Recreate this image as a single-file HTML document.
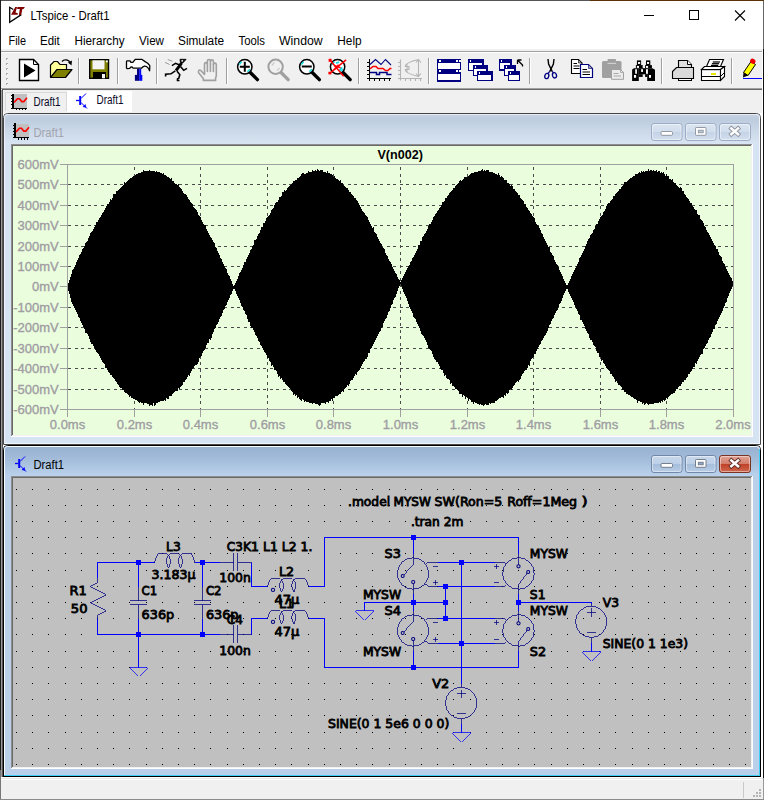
<!DOCTYPE html>
<html lang="en"><head><meta charset="utf-8"><title>LTspice - Draft1</title>
<style>
html,body{margin:0;padding:0;background:#fff;overflow:hidden}
body{width:764px;height:800px}
svg{display:block}
text{white-space:pre}
</style></head><body>
<svg width="764" height="800" viewBox="0 0 764 800">
<defs>
<linearGradient id="g1" x1="0" y1="0" x2="0" y2="1"><stop offset="0" stop-color="#C6D3E4"/><stop offset="0.18" stop-color="#BDCCDE"/><stop offset="0.55" stop-color="#CAD8E8"/><stop offset="1" stop-color="#D8E4F2"/></linearGradient>
<linearGradient id="g2" x1="0" y1="0" x2="0" y2="1"><stop offset="0" stop-color="#96B0D0"/><stop offset="0.5" stop-color="#A5BEDB"/><stop offset="1" stop-color="#BAD2EC"/></linearGradient>
<linearGradient id="b1" x1="0" y1="0" x2="0" y2="1"><stop offset="0" stop-color="#DCE6F2"/><stop offset="0.5" stop-color="#D0DDEC"/><stop offset="0.5" stop-color="#C4D3E6"/><stop offset="1" stop-color="#D2DFEE"/></linearGradient>
<linearGradient id="b2" x1="0" y1="0" x2="0" y2="1"><stop offset="0" stop-color="#C9D9EC"/><stop offset="0.5" stop-color="#BCCFE6"/><stop offset="0.5" stop-color="#A5BDDB"/><stop offset="1" stop-color="#B9CDE6"/></linearGradient>
<linearGradient id="b3" x1="0" y1="0" x2="0" y2="1"><stop offset="0" stop-color="#E3A596"/><stop offset="0.5" stop-color="#D27C69"/><stop offset="0.5" stop-color="#BF4028"/><stop offset="1" stop-color="#CF6A50"/></linearGradient>
</defs>
<rect x="0" y="0" width="764" height="800" fill="#FFFFFF" />
<rect x="1" y="49" width="761" height="1" fill="#F0F0F0" />
<rect x="1" y="50" width="761" height="38" fill="#F0F0F0" />
<rect x="1" y="51" width="761" height="1" fill="#A0A0A0" />
<rect x="1" y="52" width="761" height="1" fill="#FFFFFF" />
<rect x="1" y="88" width="761" height="25" fill="#F0F0F0" />
<rect x="1" y="88" width="761" height="1" fill="#A0A0A0" />
<rect x="2" y="89" width="760" height="1" fill="#696969" />
<rect x="0" y="0" width="590" height="1" fill="#555555" />
<rect x="590" y="0" width="174" height="1" fill="#5A3206" />
<rect x="0" y="0" width="1" height="770" fill="#1C1C1C" />
<rect x="0" y="770" width="1" height="30" fill="#777777" />
<rect x="763" y="1" width="1" height="48" fill="#666666" />
<rect x="763" y="49" width="1" height="729" fill="#111111" />
<rect x="763" y="778" width="1" height="22" fill="#999999" />
<rect x="1" y="90" width="1" height="687" fill="#9C9C9C" />
<rect x="2" y="89" width="1" height="688" fill="#555555" />
<g>
<path d="M13.3 9.5 L9.7 7.3 V22.2 L21.3 14.6" fill="none" stroke="#000" stroke-width="1.3" stroke-linejoin="miter"/>
<path d="M15.3 7.1 L17.1 7.1 L15.5 12.4 L17.9 13.2 L17.6 14.8 L11 14.8 Z" fill="#800000"/>
<path d="M17.5 7.1 L24.9 7.1 L23.5 8.9 L22.4 8.9 L21.2 15 L18.9 15 L19.8 8.9 L17 8.9 Z" fill="#800000"/>
</g>
<text x="30.5" y="20" font-family='"Liberation Sans", sans-serif' font-size="12.6" font-weight="normal" fill="#000" text-anchor="start" textLength="79" lengthAdjust="spacingAndGlyphs" >LTspice - Draft1</text>
<g stroke="#000" stroke-width="1" fill="none" shape-rendering="crispEdges">
<line x1="644" y1="15.5" x2="654" y2="15.5"/>
<rect x="689.5" y="10.5" width="9" height="9"/>
</g>
<g stroke="#000" stroke-width="1.1" fill="none"><line x1="735" y1="10.5" x2="745" y2="20.5"/><line x1="745" y1="10.5" x2="735" y2="20.5"/></g>
<text x="8.5" y="44.5" font-family='"Liberation Sans", sans-serif' font-size="12" font-weight="normal" fill="#000" text-anchor="start" textLength="17.5" lengthAdjust="spacingAndGlyphs" >File</text>
<text x="40" y="44.5" font-family='"Liberation Sans", sans-serif' font-size="12" font-weight="normal" fill="#000" text-anchor="start" textLength="19.8" lengthAdjust="spacingAndGlyphs" >Edit</text>
<text x="74.5" y="44.5" font-family='"Liberation Sans", sans-serif' font-size="12" font-weight="normal" fill="#000" text-anchor="start" textLength="50.0" lengthAdjust="spacingAndGlyphs" >Hierarchy</text>
<text x="139" y="44.5" font-family='"Liberation Sans", sans-serif' font-size="12" font-weight="normal" fill="#000" text-anchor="start" textLength="25" lengthAdjust="spacingAndGlyphs" >View</text>
<text x="178" y="44.5" font-family='"Liberation Sans", sans-serif' font-size="12" font-weight="normal" fill="#000" text-anchor="start" textLength="46" lengthAdjust="spacingAndGlyphs" >Simulate</text>
<text x="238.5" y="44.5" font-family='"Liberation Sans", sans-serif' font-size="12" font-weight="normal" fill="#000" text-anchor="start" textLength="26.5" lengthAdjust="spacingAndGlyphs" >Tools</text>
<text x="279" y="44.5" font-family='"Liberation Sans", sans-serif' font-size="12" font-weight="normal" fill="#000" text-anchor="start" textLength="43.7" lengthAdjust="spacingAndGlyphs" >Window</text>
<text x="337.3" y="44.5" font-family='"Liberation Sans", sans-serif' font-size="12" font-weight="normal" fill="#000" text-anchor="start" textLength="24.4" lengthAdjust="spacingAndGlyphs" >Help</text>
<rect x="6" y="58" width="2" height="2" fill="#ABABAB" />
<rect x="7" y="59" width="1" height="1" fill="#FFFFFF" />
<rect x="6" y="63" width="2" height="2" fill="#ABABAB" />
<rect x="7" y="64" width="1" height="1" fill="#FFFFFF" />
<rect x="6" y="68" width="2" height="2" fill="#ABABAB" />
<rect x="7" y="69" width="1" height="1" fill="#FFFFFF" />
<rect x="6" y="73" width="2" height="2" fill="#ABABAB" />
<rect x="7" y="74" width="1" height="1" fill="#FFFFFF" />
<rect x="6" y="78" width="2" height="2" fill="#ABABAB" />
<rect x="7" y="79" width="1" height="1" fill="#FFFFFF" />
<rect x="6" y="83" width="2" height="2" fill="#ABABAB" />
<rect x="7" y="84" width="1" height="1" fill="#FFFFFF" />
<rect x="78" y="58" width="1" height="26" fill="#A0A0A0" />
<rect x="79" y="58" width="1" height="26" fill="#FFFFFF" />
<rect x="117" y="58" width="1" height="26" fill="#A0A0A0" />
<rect x="118" y="58" width="1" height="26" fill="#FFFFFF" />
<rect x="156" y="58" width="1" height="26" fill="#A0A0A0" />
<rect x="157" y="58" width="1" height="26" fill="#FFFFFF" />
<rect x="226" y="58" width="1" height="26" fill="#A0A0A0" />
<rect x="227" y="58" width="1" height="26" fill="#FFFFFF" />
<rect x="358" y="58" width="1" height="26" fill="#A0A0A0" />
<rect x="359" y="58" width="1" height="26" fill="#FFFFFF" />
<rect x="428" y="58" width="1" height="26" fill="#A0A0A0" />
<rect x="429" y="58" width="1" height="26" fill="#FFFFFF" />
<rect x="529" y="58" width="1" height="26" fill="#A0A0A0" />
<rect x="530" y="58" width="1" height="26" fill="#FFFFFF" />
<rect x="661" y="58" width="1" height="26" fill="#A0A0A0" />
<rect x="662" y="58" width="1" height="26" fill="#FFFFFF" />
<rect x="731" y="58" width="1" height="26" fill="#A0A0A0" />
<rect x="732" y="58" width="1" height="26" fill="#FFFFFF" />

<!-- run -->
<g>
<path d="M19.5 59.5 H33.5 L38.5 64.5 V80.5 H19.5 Z" fill="#fff" stroke="#000" stroke-width="1.4"/>
<path d="M33.5 59.5 V64.5 H38.5" fill="none" stroke="#000" stroke-width="1"/>
<path d="M24 63.5 L24 77.5 L35.5 70.5 Z" fill="#000"/>
</g>
<!-- open -->
<g>
<path d="M50.5 77 V65 L54 61.5 H57.5 L60 64.5 H66.5 V69" fill="#FFFF9A" stroke="#000" stroke-width="1.2"/>
<path d="M50.5 77.5 L57 69.5 H72 L65.5 77.5 Z" fill="#808000" stroke="#000" stroke-width="1.2" stroke-linejoin="round"/>
<path d="M62 61.5 C64 59 69 59 70.5 63.5" fill="none" stroke="#000" stroke-width="1.3"/>
<path d="M68 62.5 L71.5 65.5 L72 60.5 Z" fill="#000"/>
</g>
<!-- save -->
<g>
<rect x="89.7" y="59.7" width="18.8" height="18.6" fill="#808000" stroke="#000" stroke-width="1.4"/>
<rect x="92.5" y="60.3" width="12" height="9" fill="#F4F4F4"/>
<rect x="93" y="72" width="13" height="6" fill="#000"/>
<rect x="102" y="74" width="3" height="4.3" fill="#F4F4F4"/>
<rect x="106" y="60.5" width="1.8" height="1.8" fill="#fff"/>
</g>
<!-- hammer -->
<g>
<path d="M126.5 61.6 Q126.5 60.8 127.5 60.8 H130 L131 62.4 H132.8 L135.2 59.3 H141.7 L145.1 61.6 L147.7 63.2 L149.8 65.6 L149.6 70.8 L148.5 68.4 L146.7 66.6 L144.6 66 L142.5 67.1 L141.5 68.2 H133.1 L132 66.8 L130.7 67.1 L129.7 68.4 L127.3 68.7 L126.5 68 Z" fill="#fff" stroke="#000" stroke-width="1.3" stroke-linejoin="round"/>
<rect x="137" y="68.8" width="2.2" height="6.2" fill="#000080"/><rect x="139.200" y="68.800" width="2" height="6.200" fill="#0000FF"/>
<rect x="134.900" y="74.900" width="4.300" height="5.900" fill="#000080"/><rect x="139.200" y="74.900" width="3.100" height="5.900" fill="#0000FF"/>
</g>
<!-- runner -->
<g stroke="#000" fill="none" stroke-linecap="butt" stroke-linejoin="miter">
<path d="M180 59.3 H186.1 L184 61.8 L182 63.4 L180.4 62.4 Z" fill="#000" stroke-width="0.8"/>
<rect x="181.4" y="60.1" width="1.7" height="1.5" fill="#fff" stroke="none"/>
<path d="M181.500 63.200 L176 70.700" stroke-width="3"/>
<path d="M179 64.700 L175.600 63.300 L171.900 65.600" stroke-width="1.500"/>
<path d="M180.500 66.600 L183.700 70.300 L187 68.300" stroke-width="1.500"/>
<path d="M175.300 70.800 L171 73.800 L165.600 74.300 V76.600" stroke-width="1.600"/>
<path d="M177 71.200 L179.800 74.600 L178.800 78.200 L177.500 78.900 V80.500 H179.500" stroke-width="1.600"/>
<path d="M167.800 59.500 L172.400 61.300 M165 62.400 L169.600 64.500" stroke="#9A9A9A" stroke-width="1"/>
</g>
<!-- hand (disabled) -->
<g fill="none" stroke="#A0A0A0" stroke-width="1.6" stroke-linejoin="round" stroke-linecap="round">
<path d="M203.3 80.4 H215.6 V78 L216.300 76 V64.600 Q216.300 63.100 214.900 63.100 Q213.400 63.100 213.400 64.600 V61.400 Q213.400 59.900 211.900 59.900 Q210.400 59.900 210.400 61.400 V61 Q210.400 59.500 208.900 59.500 Q207.400 59.500 207.400 61 V64 Q207.400 62.600 205.900 62.600 Q204.500 62.600 204.500 64 V74.500 L200.800 70.500 Q199.300 69.500 198.600 70.800 Q198 72 199 73.200 L203.300 78.500 Z"/>
<path d="M207.400 64 V71.500 M210.400 61.400 V71.500 M213.400 64.600 V71.500"/>
</g>

<g><line x1="250.0" y1="72.2" x2="257.40000000000003" y2="79.6" stroke="#000" stroke-width="3.4" stroke-linecap="round"/><circle cx="244.8" cy="66.8" r="7.2" fill="#fff" stroke="#000" stroke-width="1.5"/><path d="M239.20000000000002 64.6 L241.60000000000002 61.8" stroke="#19D9E6" stroke-width="1.6"/><path d="M247.4 71.8 L250.0 69.2" stroke="#19D9E6" stroke-width="1.6"/><path d="M239.8 66.8 H249.8 M244.8 61.8 V71.8" stroke="#000" stroke-width="2"/></g>
<g><line x1="280.8" y1="72.2" x2="288.20000000000005" y2="79.6" stroke="#A0A0A0" stroke-width="3.4" stroke-linecap="round"/><circle cx="275.6" cy="66.8" r="7.2" fill="#F0F0F0" stroke="#A0A0A0" stroke-width="2"/><path d="M271.8 65.6 L274.40000000000003 62.4 M277.1 70.6 L279.6 67.8" stroke="#C8C8C8" stroke-width="1.2"/></g>
<g><line x1="312.0" y1="72.2" x2="319.40000000000003" y2="79.6" stroke="#000" stroke-width="3.4" stroke-linecap="round"/><circle cx="306.8" cy="66.8" r="7.2" fill="#fff" stroke="#000" stroke-width="1.5"/><path d="M301.2 64.6 L303.6 61.8" stroke="#19D9E6" stroke-width="1.6"/><path d="M309.40000000000003 71.8 L312.0 69.2" stroke="#19D9E6" stroke-width="1.6"/><path d="M301.8 66.5 H311.8" stroke="#000" stroke-width="2"/></g>
<g><line x1="342.8" y1="72.2" x2="350.20000000000005" y2="79.6" stroke="#000" stroke-width="3.4" stroke-linecap="round"/><circle cx="337.6" cy="66.8" r="7.2" fill="#fff" stroke="#000" stroke-width="1.5"/><path d="M332.0 64.6 L334.40000000000003 61.8" stroke="#19D9E6" stroke-width="1.6"/><path d="M340.20000000000005 71.8 L342.8 69.2" stroke="#19D9E6" stroke-width="1.6"/><path d="M336.1 63.199999999999996 L339.1 62.199999999999996 M339.6 70.39999999999999 L342.20000000000005 67.39999999999999" stroke="#19D9E6" stroke-width="1.8"/><path d="M330.1 60.3 L343.6 76.3 M329.6 73.3 L346.1 59.8" stroke="#F00" stroke-width="1.5"/><rect x="328.6" y="58.8" width="3" height="3" fill="#F00"/><rect x="328.40000000000003" y="71.8" width="3" height="2.6" fill="#F00"/><path d="M334.6 65.8 L340.6 67.8 M334.1 69.8 L338.6 64.8" stroke="#F00" stroke-width="1.6"/></g>

<!-- waveform icon -->
<g fill="none" shape-rendering="crispEdges">
<path d="M369.5 59 V80.5 M367 78.500 H391" stroke="#000" stroke-width="1.5"/>
<path d="M367 62.5 H369 M367 66.5 H369 M367 70.5 H369 M367 74.5 H369 M374.500 79 V81 M379.500 79 V81 M384.500 79 V81 M389.500 79 V81" stroke="#000" stroke-width="1.2"/>
</g>
<g fill="none">
<path d="M370 64.5 L375.5 59.5 L381 64.5 L385.5 59.5 L391 65" stroke="#000080" stroke-width="1.1"/>
<path d="M370 68.800 L373 66.500 H376 L378 68.500 H383 L385.500 70.500 H388 L390 68.500 H391.500" stroke="#F00" stroke-width="1.5"/>
<path d="M370 72.5 H376.5 V74.5 H379.5 V72.5 H387 V74.5 H391.500" stroke="#000080" stroke-width="1.5"/>
</g>
<!-- eye diagram (disabled) -->
<g fill="none" stroke="#B4B4B4" stroke-width="1.1">
<path d="M400.5 59.500 V80.500 M398 78.500 H422"/>
<path d="M398 62.5 H400 M398 66.5 H400 M398 70.5 H400 M398 74.5 H400 M405.500 79 V81 M410.500 79 V81 M415.500 79 V81 M420.500 79 V81"/>
<path d="M405 66.5 C405.500 63 412 61 418.5 59.500 M405 69.500 C405.500 73 412 75 418.500 76.500 M405 66.500 H409 V69.500 H405 M407 64 V72 M418.500 60 V76.5 M416 62.500 L418.500 59.500 L421 62.500 M416 73.500 L418.500 76.500 L421 73.500"/>
</g>
<!-- tile -->
<g shape-rendering="crispEdges">
<rect x="437.5" y="59.500" width="23" height="21.5" fill="#fff" stroke="#000080" stroke-width="1.4"/>
<rect x="437" y="59" width="24" height="4" fill="#000080"/>
<rect x="437" y="69" width="24" height="4.500" fill="#000080"/>
<rect x="438.500" y="60" width="2" height="2" fill="#fff"/><rect x="455.500" y="60" width="2" height="2" fill="#fff"/><rect x="458.500" y="60" width="2" height="2" fill="#fff"/>
<rect x="438.500" y="70.300" width="2" height="2" fill="#fff"/><rect x="455.500" y="70.300" width="2" height="2" fill="#fff"/><rect x="458.500" y="70.300" width="2" height="2" fill="#fff"/>
</g>

<g shape-rendering="crispEdges"><rect x="468.6" y="59.6" width="14.3" height="10.8" fill="#fff" stroke="#000080" stroke-width="1.3"/><rect x="468" y="59" width="15.5" height="3.6" fill="#000080"/><rect x="469.5" y="59.9" width="1.8" height="1.8" fill="#fff"/></g>
<g shape-rendering="crispEdges"><rect x="473.6" y="65.6" width="13.3" height="9.8" fill="#fff" stroke="#000080" stroke-width="1.3"/><rect x="473" y="65" width="14.5" height="3.6" fill="#000080"/><rect x="474.5" y="65.9" width="1.8" height="1.8" fill="#fff"/></g>
<g shape-rendering="crispEdges"><rect x="477.6" y="71.6" width="14.3" height="9.0" fill="#fff" stroke="#000080" stroke-width="1.3"/><rect x="477" y="71" width="15.5" height="3.6" fill="#000080"/><rect x="478.5" y="71.9" width="1.8" height="1.8" fill="#fff"/></g>
<g shape-rendering="crispEdges"><rect x="499.6" y="59.6" width="11.3" height="10.3" fill="#fff" stroke="#000080" stroke-width="1.3"/><rect x="499" y="59" width="12.5" height="3.6" fill="#000080"/><rect x="500.5" y="59.9" width="1.8" height="1.8" fill="#fff"/></g>
<g shape-rendering="crispEdges"><rect x="504.6" y="65.6" width="10.3" height="9.8" fill="#fff" stroke="#000080" stroke-width="1.3"/><rect x="504" y="65" width="11.5" height="3.6" fill="#000080"/><rect x="505.5" y="65.9" width="1.8" height="1.8" fill="#fff"/></g>
<g shape-rendering="crispEdges"><rect x="508.6" y="71.6" width="11.100000000000001" height="9.0" fill="#fff" stroke="#000080" stroke-width="1.3"/><rect x="508" y="71" width="12.3" height="3.6" fill="#000080"/><rect x="509.5" y="71.9" width="1.8" height="1.8" fill="#fff"/></g>
<path d="M517.5 60 H521.500 M517.500 60 V64 M517.800 60.300 L522.500 65 V66.500" fill="none" stroke="#000" stroke-width="1.3"/>

<!-- scissors -->
<g fill="none">
<path d="M548 59 L548.600 64 L552.300 71.600 M554 59 L553.400 64 L549.700 71.600" stroke="#000" stroke-width="1.400"/>
<ellipse cx="546.800" cy="76" rx="2" ry="2.700" stroke="#000080" stroke-width="1.300" transform="rotate(15 546.800 76)"/>
<ellipse cx="554.500" cy="75.300" rx="2" ry="2.700" stroke="#000080" stroke-width="1.300" transform="rotate(-15 554.500 75.300)"/>
<path d="M549.700 71.400 L548.200 73.400 M552.300 71.400 L553.500 72.800" stroke="#000080" stroke-width="1.300"/>
</g>
<!-- copy -->
<g>
<path d="M571.500 59.500 H578.500 L582 63 V73.500 H571.500 Z" fill="#fff" stroke="#000" stroke-width="1.1"/>
<path d="M578.500 59.500 V63 H582 Z" fill="#A0A0A0" stroke="#000" stroke-width="0.600"/>
<path d="M573.500 63.500 H577 M573.500 66 H579.500 M573.500 68.500 H579.500" stroke="#000" stroke-width="1.1"/>
<path d="M580.500 64.500 H588.500 L592.500 68.500 V77.500 H580.500 Z" fill="#fff" stroke="#000080" stroke-width="1.2"/>
<path d="M588.500 64.500 V68.500 H592.500 Z" fill="#A0A0A0" stroke="#000080" stroke-width="0.600"/>
<path d="M582.500 69.500 H587 M582.500 72 H590 M582.500 74.500 H590" stroke="#000" stroke-width="1.1"/>
</g>
<!-- paste disabled -->
<g>
<rect x="602" y="61" width="19.500" height="17" rx="1.500" fill="#A0A0A0"/>
<rect x="607.500" y="59" width="8.500" height="4" rx="1" fill="#A0A0A0"/>
<rect x="607.500" y="62.800" width="8.500" height="1.200" fill="#D0D0D0"/>
<path d="M611.500 69.500 H620.500 L623.500 72.500 V79.300 H611.500 Z" fill="#ECECEC" stroke="#A0A0A0" stroke-width="1"/>
<path d="M620.500 69.500 V72.500 H623.500" fill="none" stroke="#A0A0A0" stroke-width="0.8"/>
<path d="M613.500 73.500 H618.500 M613.500 76 H621" stroke="#A8A8A8" stroke-width="1.1"/>
</g>
<!-- binoculars -->
<g fill="#000">
<rect x="636.900" y="60.400" width="4.200" height="4.800"/><rect x="635.900" y="65.100" width="6.800" height="3.200"/>
<rect x="646" y="60.400" width="4.300" height="4.800"/><rect x="645.100" y="65.100" width="6.800" height="3.200"/>
<path d="M632.100 69.400 L634 68.200 H638.800 V80.900 H632.100 Z"/>
<rect x="638.700" y="68.200" width="8.600" height="6.100"/><rect x="638.700" y="74.200" width="4" height="2.700"/><rect x="645.100" y="74.200" width="2.200" height="2.700"/>
<path d="M647.200 68.200 H652.500 L655 69.800 V80.900 H647.200 Z"/>
<g fill="#fff"><rect x="638" y="62" width="2.200" height="1.900"/><rect x="647" y="62" width="2.100" height="1.900"/><rect x="636.900" y="66" width="2.100" height="1.900"/><rect x="646" y="66" width="2.100" height="1.900"/>
<rect x="635.200" y="69.200" width="1.700" height="4.600"/><rect x="646" y="69.200" width="1.900" height="4.600"/><rect x="641.100" y="69.200" width="1.900" height="2.700"/>
<rect x="634" y="75" width="2.100" height="2.800"/><rect x="649" y="75" width="2" height="2.800"/></g>
</g>
<!-- print setup -->
<g stroke="#000" stroke-width="1.100" stroke-linejoin="miter">
<path d="M678.500 67.500 V60.500 H687.500 L691.500 64.500 V67.500" fill="#DEDEDE"/>
<path d="M687.500 60.500 V64.500 H691.500" fill="#fff" stroke-width="1"/>
<path d="M672.500 71.500 L676.500 67.500 H693.500 V78.500 H672.500 Z" fill="#DADADA"/>
<rect x="678.500" y="78.500" width="13" height="2" fill="#fff" stroke-width="1"/>
</g>
<!-- printer -->
<g stroke="#000" stroke-width="1.100" stroke-linejoin="miter">
<path d="M701.500 69.500 L704.500 66.500 H724.500 L720.500 69.500 Z" fill="#fff"/>
<path d="M709.500 59.500 H723.500 L720.500 66.500 H706.500 Z" fill="#fff"/>
<g stroke="none" fill="#000"><rect x="712.800" y="61.400" width="7.200" height="1.200"/><rect x="711.900" y="63.100" width="7.200" height="1.200"/><rect x="711" y="64.800" width="7.200" height="1.200"/></g>
<path d="M701.500 69.500 H720.500 V80.500 H701.500 Z" fill="#fff"/>
<path d="M720.500 69.500 L724.500 66.500 V76.500 L720.500 80.500 Z" fill="#fff"/>
<rect x="702" y="70" width="18" height="1" fill="#CFCFCF" stroke="none"/>
<path d="M701.500 76.500 H720.500 L724.500 72.500" fill="none" stroke-width="1"/>
<rect x="711" y="73" width="5" height="2" fill="#E6E600" stroke="none"/>
</g>
<!-- pencil -->
<g>
<path d="M743.500 72.500 L751 61.500 L755.500 64.500 L748 75.500 Z" fill="#FFFF00" stroke="#000" stroke-width="1"/>
<path d="M743.500 72.500 L748 75.500 L743 77.500 Z" fill="#000"/>
<ellipse cx="752.800" cy="61.300" rx="2.800" ry="2.400" fill="#F00000" transform="rotate(34 752.800 61.300)"/>
<rect x="743" y="78" width="19" height="1" fill="#0000FF"/>
</g>

<rect x="5.5" y="92.500" width="61" height="19" fill="#F0F0F0" stroke="#D9D9D9" stroke-width="1"/>
<rect x="67" y="91" width="65" height="21" fill="#FFFFFF" />
<rect x="5" y="111" width="62" height="2" fill="#F0F0F0" />
<g shape-rendering="crispEdges"><rect x="13.7" y="94.2" width="13.3" height="13.3" fill="#C0C0C0"/><rect x="12.3" y="93.7" width="1.4" height="15.2" fill="#000"/><rect x="10.8" y="107.5" width="16.2" height="1.4" fill="#000"/><rect x="10.8" y="95.2" width="1.6" height="1" fill="#000"/><rect x="10.8" y="98.2" width="1.6" height="1" fill="#000"/><rect x="10.8" y="101.2" width="1.6" height="1" fill="#000"/><rect x="10.8" y="104.2" width="1.6" height="1" fill="#000"/><rect x="16.0" y="108.7" width="1" height="1.6" fill="#000"/><rect x="19.0" y="108.7" width="1" height="1.6" fill="#000"/><rect x="22.0" y="108.7" width="1" height="1.6" fill="#000"/><rect x="25.0" y="108.7" width="1" height="1.6" fill="#000"/></g><path d="M14.1 102.4 L17.5 98.7 H19.5 L21.8 101.6 H23.8 L27.0 97.8" fill="none" stroke="#F00" stroke-width="1.6"/>
<text x="33.5" y="105.8" font-family='"Liberation Sans", sans-serif' font-size="12" font-weight="normal" fill="#0A0A28" text-anchor="start" textLength="27" lengthAdjust="spacingAndGlyphs" >Draft1</text>
<g fill="none" stroke="#0000FF"><path d="M76 100.5 H79.5" stroke-width="1.300"/><path d="M80.2 96 V105" stroke-width="2"/><path d="M81 98.5 L86 93.5" stroke-width="1"/><path d="M81 102.5 L87 108.5" stroke-width="1"/><path d="M83 106.8 L85.8 107.3 L85.3 104.5 Z" fill="#0000FF" stroke-width="0.600"/></g>
<text x="96.5" y="104.3" font-family='"Liberation Sans", sans-serif' font-size="12" font-weight="normal" fill="#0A0A28" text-anchor="start" textLength="27" lengthAdjust="spacingAndGlyphs" >Draft1</text>
<path d="M3.500 444.5 V117.5 Q3.500 113.5 7.500 113.5 H756.500 Q760.500 113.5 760.500 117.5 V444.5 Z" fill="#D6E3F2" stroke="#454545" stroke-width="1"/>
<path d="M4 144 V117.5 Q4 114 7.500 114 H756.500 Q760 114 760 117.5 V144 Z" fill="url(#g1)"/>
<path d="M4.500 444 V117.5 Q4.500 114.5 7.500 114.5 H756.500 Q759.500 114.5 759.500 117.5" fill="none" stroke="#FFFFFF" stroke-width="1" stroke-opacity="0.6"/>
<rect x="759" y="117" width="1" height="327" fill="#F2F6FB" />
<rect x="5" y="443" width="755" height="1" fill="#F2F6FB" />
<rect x="11" y="144" width="742" height="1" fill="#8E8E8E" />
<rect x="11" y="144" width="1" height="293" fill="#8E8E8E" />
<rect x="12" y="145" width="740" height="1" fill="#696969" />
<rect x="12" y="145" width="1" height="291" fill="#696969" />
<rect x="752" y="144" width="1" height="293" fill="#FFFFFF" />
<rect x="11" y="436" width="742" height="1" fill="#FFFFFF" />
<rect x="751" y="145" width="1" height="291" fill="#F1F1F1" />
<rect x="12" y="435" width="740" height="1" fill="#F1F1F1" />
<g shape-rendering="crispEdges"><rect x="15.7" y="123.7" width="13.3" height="13.3" fill="#C0C0C0"/><rect x="14.3" y="123.2" width="1.4" height="15.2" fill="#000"/><rect x="12.8" y="137.0" width="16.2" height="1.4" fill="#000"/><rect x="12.8" y="124.7" width="1.6" height="1" fill="#000"/><rect x="12.8" y="127.7" width="1.6" height="1" fill="#000"/><rect x="12.8" y="130.7" width="1.6" height="1" fill="#000"/><rect x="12.8" y="133.7" width="1.6" height="1" fill="#000"/><rect x="18.0" y="138.2" width="1" height="1.6" fill="#000"/><rect x="21.0" y="138.2" width="1" height="1.6" fill="#000"/><rect x="24.0" y="138.2" width="1" height="1.6" fill="#000"/><rect x="27.0" y="138.2" width="1" height="1.6" fill="#000"/></g><path d="M16.1 131.9 L19.5 128.2 H21.5 L23.8 131.1 H25.8 L29.0 127.3" fill="none" stroke="#F00" stroke-width="1.6"/>
<text x="33.5" y="137" font-family='"Liberation Sans", sans-serif' font-size="12" font-weight="normal" fill="#A3A3AE" text-anchor="start" textLength="30.5" lengthAdjust="spacingAndGlyphs" >Draft1</text>
<rect x="651.5" y="123.5" width="30.5" height="17" rx="2.500" fill="url(#b1)" stroke="#9DACC6" stroke-width="1"/>
<rect x="652.5" y="124.5" width="28.5" height="15" rx="1.800" fill="none" stroke="#fff" stroke-opacity="0.450" stroke-width="1"/>
<rect x="685.5" y="123.5" width="30.5" height="17" rx="2.500" fill="url(#b1)" stroke="#9DACC6" stroke-width="1"/>
<rect x="686.5" y="124.5" width="28.5" height="15" rx="1.800" fill="none" stroke="#fff" stroke-opacity="0.450" stroke-width="1"/>
<rect x="719.5" y="123.5" width="31.0" height="17" rx="2.500" fill="url(#b1)" stroke="#9DACC6" stroke-width="1"/>
<rect x="720.5" y="124.5" width="29.0" height="15" rx="1.800" fill="none" stroke="#fff" stroke-opacity="0.450" stroke-width="1"/>
<rect x="661" y="131.5" width="11.500" height="3.800" rx="1" fill="#fff" stroke="#8A8F99" stroke-width="0.900"/>
<rect x="695.500" y="127.5" width="10.500" height="7.800" rx="0.800" fill="#fff" stroke="#8A8F99" stroke-width="0.900"/>
<rect x="698.300" y="130.2" width="4.900" height="2.600" fill="#B9C6D8" stroke="#8A8F99" stroke-width="0.800"/>
<path d="M731.3000000000001 128.4 L738.1 134.20000000000002 M738.1 128.4 L731.3000000000001 134.20000000000002" stroke="#8A8F99" stroke-width="4.200" stroke-linecap="square"/>
<path d="M731.3000000000001 128.4 L738.1 134.20000000000002 M738.1 128.4 L731.3000000000001 134.20000000000002" stroke="#fff" stroke-width="2.500" stroke-linecap="square"/>
<rect x="13" y="146" width="738" height="289" fill="#EAFEDE" />
<g stroke="#4A4A4A" stroke-width="1" stroke-dasharray="3 3.500" shape-rendering="crispEdges">
<line x1="134.5" y1="167" x2="134.5" y2="409"/>
<line x1="200.5" y1="167" x2="200.5" y2="409"/>
<line x1="267.5" y1="167" x2="267.5" y2="409"/>
<line x1="333.5" y1="167" x2="333.5" y2="409"/>
<line x1="400.5" y1="167" x2="400.5" y2="409"/>
<line x1="467.5" y1="167" x2="467.5" y2="409"/>
<line x1="533.5" y1="167" x2="533.5" y2="409"/>
<line x1="600.5" y1="167" x2="600.5" y2="409"/>
<line x1="666.5" y1="167" x2="666.5" y2="409"/>
<line x1="68" y1="184.5" x2="733" y2="184.5"/>
<line x1="68" y1="205.5" x2="733" y2="205.5"/>
<line x1="68" y1="225.5" x2="733" y2="225.5"/>
<line x1="68" y1="246.5" x2="733" y2="246.5"/>
<line x1="68" y1="266.5" x2="733" y2="266.5"/>
<line x1="68" y1="286.5" x2="733" y2="286.5"/>
<line x1="68" y1="307.5" x2="733" y2="307.5"/>
<line x1="68" y1="327.5" x2="733" y2="327.5"/>
<line x1="68" y1="348.5" x2="733" y2="348.5"/>
<line x1="68" y1="368.5" x2="733" y2="368.5"/>
<line x1="68" y1="389.5" x2="733" y2="389.5"/>
</g>
<polygon points="67,286.4 68,286.4 68,283.2 69,283.2 69,280.2 70,280.2 70,277.1 71,277.1 71,273.7 72,273.7 72,269.5 73,269.5 73,268.9 74,268.9 74,266.7 75,266.7 75,264.5 76,264.5 76,262.0 77,262.0 77,260.1 78,260.1 78,258.3 79,258.3 79,255.1 80,255.1 80,254.3 81,254.3 81,252.0 82,252.0 82,248.5 83,248.5 83,247.5 84,247.5 84,246.2 85,246.2 85,243.4 86,243.4 86,242.4 87,242.4 87,240.5 88,240.5 88,238.4 89,238.4 89,236.4 90,236.4 90,233.3 91,233.3 91,232.2 92,232.2 92,230.9 93,230.9 93,228.7 94,228.7 94,226.7 95,226.7 95,224.8 96,224.8 96,221.5 97,221.5 97,221.8 98,221.8 98,220.1 99,220.1 99,218.4 100,218.4 100,216.8 101,216.8 101,214.5 102,214.5 102,212.9 103,212.9 103,211.6 104,211.6 104,209.7 105,209.7 105,208.4 106,208.4 106,206.4 107,206.4 107,203.9 108,203.9 108,203.8 109,203.8 109,202.1 110,202.1 110,199.2 111,199.2 111,199.6 112,199.6 112,198.3 113,198.3 113,194.4 114,194.4 114,193.5 115,193.5 115,194.1 116,194.1 116,191.4 117,191.4 117,191.4 118,191.4 118,189.6 119,189.6 119,188.9 120,188.9 120,187.9 121,187.9 121,186.8 122,186.8 122,185.7 123,185.7 123,185.1 124,185.1 124,181.8 125,181.8 125,182.6 126,182.6 126,182.2 127,182.2 127,181.4 128,181.4 128,180.2 129,180.2 129,179.3 130,179.3 130,178.4 131,178.4 131,178.2 132,178.2 132,176.5 133,176.5 133,176.4 134,176.4 134,175.7 135,175.7 135,174.7 136,174.7 136,174.2 137,174.2 137,174.0 138,174.0 138,172.7 139,172.7 139,172.7 140,172.7 140,173.2 141,173.2 141,172.4 142,172.4 142,172.1 143,172.1 143,170.4 144,170.4 144,171.2 145,171.2 145,171.4 146,171.4 146,171.1 147,171.1 147,171.0 148,171.0 148,170.7 149,170.7 149,170.0 150,170.0 150,171.0 151,171.0 151,170.5 152,170.5 152,170.9 153,170.9 153,171.0 154,171.0 154,171.1 155,171.1 155,171.6 156,171.6 156,171.3 157,171.3 157,171.8 158,171.8 158,172.4 159,172.4 159,172.3 160,172.3 160,172.7 161,172.7 161,173.1 162,173.1 162,173.5 163,173.5 163,173.0 164,173.0 164,174.6 165,174.6 165,175.2 166,175.2 166,176.1 167,176.1 167,176.8 168,176.8 168,177.2 169,177.2 169,178.2 170,178.2 170,179.0 171,179.0 171,177.7 172,177.7 172,180.8 173,180.8 173,181.4 174,181.4 174,182.6 175,182.6 175,183.5 176,183.5 176,183.7 177,183.7 177,184.6 178,184.6 178,184.1 179,184.1 179,187.4 180,187.4 180,188.0 181,188.0 181,189.4 182,189.4 182,190.5 183,190.5 183,192.6 184,192.6 184,193.6 185,193.6 185,194.4 186,194.4 186,195.1 187,195.1 187,196.9 188,196.9 188,199.0 189,199.0 189,199.6 190,199.6 190,201.6 191,201.6 191,203.1 192,203.1 192,204.1 193,204.1 193,206.5 194,206.5 194,207.5 195,207.5 195,209.4 196,209.4 196,209.5 197,209.5 197,211.9 198,211.9 198,215.0 199,215.0 199,216.3 200,216.3 200,216.8 201,216.8 201,220.1 202,220.1 202,221.9 203,221.9 203,223.8 204,223.8 204,225.4 205,225.4 205,225.3 206,225.3 206,228.9 207,228.9 207,231.2 208,231.2 208,233.3 209,233.3 209,235.0 210,235.0 210,236.7 211,236.7 211,238.2 212,238.2 212,240.0 213,240.0 213,242.1 214,242.1 214,243.2 215,243.2 215,246.8 216,246.8 216,248.4 217,248.4 217,251.4 218,251.4 218,252.8 219,252.8 219,255.4 220,255.4 220,257.6 221,257.6 221,259.1 222,259.1 222,261.7 223,261.7 223,263.7 224,263.7 224,265.7 225,265.7 225,268.3 226,268.3 226,269.1 227,269.1 227,272.5 228,272.5 228,274.6 229,274.6 229,276.3 230,276.3 230,279.2 231,279.2 231,280.7 232,280.7 232,283.6 233,283.6 233,285.7 234,285.7 234,285.3 235,285.3 235,283.1 236,283.1 236,280.9 237,280.9 237,278.6 238,278.6 238,275.9 239,275.9 239,273.4 240,273.4 240,272.0 241,272.0 241,269.7 242,269.7 242,267.7 243,267.7 243,264.8 244,264.8 244,261.7 245,261.7 245,261.5 246,261.5 246,259.1 247,259.1 247,256.6 248,256.6 248,255.2 249,255.2 249,252.7 250,252.7 250,249.6 251,249.6 251,248.6 252,248.6 252,246.1 253,246.1 253,244.8 254,244.8 254,240.3 255,240.3 255,240.3 256,240.3 256,238.7 257,238.7 257,236.4 258,236.4 258,234.4 259,234.4 259,232.5 260,232.5 260,229.9 261,229.9 261,227.0 262,227.0 262,227.3 263,227.3 263,223.1 264,223.1 264,223.1 265,223.1 265,221.4 266,221.4 266,217.7 267,217.7 267,216.6 268,216.6 268,216.0 269,216.0 269,214.7 270,214.7 270,212.9 271,212.9 271,209.6 272,209.6 272,209.4 273,209.4 273,207.8 274,207.8 274,205.2 275,205.2 275,203.3 276,203.3 276,202.4 277,202.4 277,201.7 278,201.7 278,200.1 279,200.1 279,197.3 280,197.3 280,197.0 281,197.0 281,196.3 282,196.3 282,192.2 283,192.2 283,192.0 284,192.0 284,190.0 285,190.0 285,191.1 286,191.1 286,189.6 287,189.6 287,188.4 288,188.4 288,187.1 289,187.1 289,186.3 290,186.3 290,184.8 291,184.8 291,184.1 292,184.1 292,183.2 293,183.2 293,180.7 294,180.7 294,180.7 295,180.7 295,180.3 296,180.3 296,179.6 297,179.6 297,178.4 298,178.4 298,178.1 299,178.1 299,177.1 300,177.1 300,175.5 301,175.5 301,173.9 302,173.9 302,173.1 303,173.1 303,173.2 304,173.2 304,173.8 305,173.8 305,173.6 306,173.6 306,173.1 307,173.1 307,172.6 308,172.6 308,171.0 309,171.0 309,171.6 310,171.6 310,171.6 311,171.6 311,171.6 312,171.6 312,170.3 313,170.3 313,171.1 314,171.1 314,171.0 315,171.0 315,170.2 316,170.2 316,170.6 317,170.6 317,168.6 318,168.6 318,170.2 319,170.2 319,170.5 320,170.5 320,170.2 321,170.2 321,170.0 322,170.0 322,170.2 323,170.2 323,171.7 324,171.7 324,172.2 325,172.2 325,171.8 326,171.8 326,172.6 327,172.6 327,171.4 328,171.4 328,173.4 329,173.4 329,172.5 330,172.5 330,174.4 331,174.4 331,173.9 332,173.9 332,175.0 333,175.0 333,176.5 334,176.5 334,176.4 335,176.4 335,177.6 336,177.6 336,178.7 337,178.7 337,179.2 338,179.2 338,179.7 339,179.7 339,181.2 340,181.2 340,180.3 341,180.3 341,182.8 342,182.8 342,182.9 343,182.9 343,185.0 344,185.0 344,186.0 345,186.0 345,186.7 346,186.7 346,188.0 347,188.0 347,188.1 348,188.1 348,190.2 349,190.2 349,191.5 350,191.5 350,192.1 351,192.1 351,194.3 352,194.3 352,194.6 353,194.6 353,196.3 354,196.3 354,197.9 355,197.9 355,198.2 356,198.2 356,200.0 357,200.0 357,201.1 358,201.1 358,203.4 359,203.4 359,205.3 360,205.3 360,206.9 361,206.9 361,209.0 362,209.0 362,210.6 363,210.6 363,212.2 364,212.2 364,212.8 365,212.8 365,215.4 366,215.4 366,216.0 367,216.0 367,217.2 368,217.2 368,220.4 369,220.4 369,221.6 370,221.6 370,224.0 371,224.0 371,226.2 372,226.2 372,227.8 373,227.8 373,227.3 374,227.3 374,231.5 375,231.5 375,233.3 376,233.3 376,233.6 377,233.6 377,237.0 378,237.0 378,239.1 379,239.1 379,241.1 380,241.1 380,243.1 381,243.1 381,244.4 382,244.4 382,246.8 383,246.8 383,248.4 384,248.4 384,249.0 385,249.0 385,252.6 386,252.6 386,254.9 387,254.9 387,256.4 388,256.4 388,259.0 389,259.0 389,260.5 390,260.5 390,262.3 391,262.3 391,263.9 392,263.9 392,266.5 393,266.5 393,268.9 394,268.9 394,270.7 395,270.7 395,273.0 396,273.0 396,273.9 397,273.9 397,276.9 398,276.9 398,278.7 399,278.7 399,280.4 400,280.4 400,282.1 401,282.1 401,279.7 402,279.7 402,278.2 403,278.2 403,275.9 404,275.9 404,274.2 405,274.2 405,272.4 406,272.4 406,270.2 407,270.2 407,268.1 408,268.1 408,266.4 409,266.4 409,264.5 410,264.5 410,262.3 411,262.3 411,260.5 412,260.5 412,258.0 413,258.0 413,256.5 414,256.5 414,254.5 415,254.5 415,252.5 416,252.5 416,250.5 417,250.5 417,248.6 418,248.6 418,244.7 419,244.7 419,244.6 420,244.6 420,241.4 421,241.4 421,240.7 422,240.7 422,237.4 423,237.4 423,236.2 424,236.2 424,233.5 425,233.5 425,233.1 426,233.1 426,231.2 427,231.2 427,229.0 428,229.0 428,225.8 429,225.8 429,224.0 430,224.0 430,223.5 431,223.5 431,221.5 432,221.5 432,220.3 433,220.3 433,216.9 434,216.9 434,216.1 435,216.1 435,214.0 436,214.0 436,213.0 437,213.0 437,211.4 438,211.4 438,209.8 439,209.8 439,208.1 440,208.1 440,206.9 441,206.9 441,204.7 442,204.7 442,201.6 443,201.6 443,202.2 444,202.2 444,200.7 445,200.7 445,197.5 446,197.5 446,198.0 447,198.0 447,196.4 448,196.4 448,194.9 449,194.9 449,192.6 450,192.6 450,192.2 451,192.2 451,191.4 452,191.4 452,189.8 453,189.8 453,187.6 454,187.6 454,187.6 455,187.6 455,185.8 456,185.8 456,185.0 457,185.0 457,183.7 458,183.7 458,182.7 459,182.7 459,181.4 460,181.4 460,180.3 461,180.3 461,180.8 462,180.8 462,179.6 463,179.6 463,178.9 464,178.9 464,176.7 465,176.7 465,176.8 466,176.8 466,176.6 467,176.6 467,176.5 468,176.5 468,175.8 469,175.8 469,174.8 470,174.8 470,173.7 471,173.7 471,172.9 472,172.9 472,172.8 473,172.8 473,172.8 474,172.8 474,172.4 475,172.4 475,172.4 476,172.4 476,171.7 477,171.7 477,171.7 478,171.7 478,171.2 479,171.2 479,170.8 480,170.8 480,170.9 481,170.9 481,170.2 482,170.2 482,168.6 483,168.6 483,170.8 484,170.8 484,170.2 485,170.2 485,171.0 486,171.0 486,170.0 487,170.0 487,169.9 488,169.9 488,169.8 489,169.8 489,171.5 490,171.5 490,171.6 491,171.6 491,171.6 492,171.6 492,172.3 493,172.3 493,172.7 494,172.7 494,172.6 495,172.6 495,173.7 496,173.7 496,174.3 497,174.3 497,174.9 498,174.9 498,173.3 499,173.3 499,174.8 500,174.8 500,176.6 501,176.6 501,175.8 502,175.8 502,176.7 503,176.7 503,177.7 504,177.7 504,180.0 505,180.0 505,180.2 506,180.2 506,179.6 507,179.6 507,182.5 508,182.5 508,182.6 509,182.6 509,183.9 510,183.9 510,185.5 511,185.5 511,184.5 512,184.5 512,186.3 513,186.3 513,188.6 514,188.6 514,189.1 515,189.1 515,191.3 516,191.3 516,192.3 517,192.3 517,192.8 518,192.8 518,195.2 519,195.2 519,195.0 520,195.0 520,197.5 521,197.5 521,198.7 522,198.7 522,200.1 523,200.1 523,201.4 524,201.4 524,203.7 525,203.7 525,203.9 526,203.9 526,206.8 527,206.8 527,208.1 528,208.1 528,209.7 529,209.7 529,211.1 530,211.1 530,212.9 531,212.9 531,213.7 532,213.7 532,215.5 533,215.5 533,217.1 534,217.1 534,218.2 535,218.2 535,221.8 536,221.8 536,223.7 537,223.7 537,225.4 538,225.4 538,226.3 539,226.3 539,228.2 540,228.2 540,229.7 541,229.7 541,232.6 542,232.6 542,233.7 543,233.7 543,237.0 544,237.0 544,239.1 545,239.1 545,240.8 546,240.8 546,243.0 547,243.0 547,244.8 548,244.8 548,246.8 549,246.8 549,247.2 550,247.2 550,251.5 551,251.5 551,252.8 552,252.8 552,254.8 553,254.8 553,256.3 554,256.3 554,259.5 555,259.5 555,261.6 556,261.6 556,263.8 557,263.8 557,265.2 558,265.2 558,267.4 559,267.4 559,269.9 560,269.9 560,272.4 561,272.4 561,274.3 562,274.3 562,276.1 563,276.1 563,278.9 564,278.9 564,281.4 565,281.4 565,282.9 566,282.9 566,285.4 567,285.4 567,285.2 568,285.2 568,283.0 569,283.0 569,280.7 570,280.7 570,278.8 571,278.8 571,275.7 572,275.7 572,274.3 573,274.3 573,272.2 574,272.2 574,269.9 575,269.9 575,267.7 576,267.7 576,265.5 577,265.5 577,263.6 578,263.6 578,261.5 579,261.5 579,257.9 580,257.9 580,257.2 581,257.2 581,254.8 582,254.8 582,252.9 583,252.9 583,250.5 584,250.5 584,248.8 585,248.8 585,245.9 586,245.9 586,243.5 587,243.5 587,241.2 588,241.2 588,238.9 589,238.9 589,238.3 590,238.3 590,235.4 591,235.4 591,234.3 592,234.3 592,232.7 593,232.7 593,229.7 594,229.7 594,229.1 595,229.1 595,226.3 596,226.3 596,223.5 597,223.5 597,223.5 598,223.5 598,220.9 599,220.9 599,219.4 600,219.4 600,217.3 601,217.3 601,216.0 602,216.0 602,214.6 603,214.6 603,212.1 604,212.1 604,210.7 605,210.7 605,209.4 606,209.4 606,205.7 607,205.7 607,204.4 608,204.4 608,203.3 609,203.3 609,203.1 610,203.1 610,201.2 611,201.2 611,199.7 612,199.7 612,199.1 613,199.1 613,195.9 614,195.9 614,195.9 615,195.9 615,194.3 616,194.3 616,193.2 617,193.2 617,192.1 618,192.1 618,190.6 619,190.6 619,188.5 620,188.5 620,188.7 621,188.7 621,186.9 622,186.9 622,186.2 623,186.2 623,185.1 624,185.1 624,182.3 625,182.3 625,181.8 626,181.8 626,182.1 627,182.1 627,180.5 628,180.5 628,180.3 629,180.3 629,179.2 630,179.2 630,178.3 631,178.3 631,178.0 632,178.0 632,177.3 633,177.3 633,176.4 634,176.4 634,176.1 635,176.1 635,173.9 636,173.9 636,173.5 637,173.5 637,174.2 638,174.2 638,173.4 639,173.4 639,172.1 640,172.1 640,172.6 641,172.6 641,170.8 642,170.8 642,172.1 643,172.1 643,171.4 644,171.4 644,171.6 645,171.6 645,171.4 646,171.4 646,171.2 647,171.2 647,171.2 648,171.2 648,168.9 649,168.9 649,171.2 650,171.2 650,170.2 651,170.2 651,169.9 652,169.9 652,170.6 653,170.6 653,170.4 654,170.4 654,171.4 655,171.4 655,171.4 656,171.4 656,170.2 657,170.2 657,171.9 658,171.9 658,171.0 659,171.0 659,171.4 660,171.4 660,173.2 661,173.2 661,172.4 662,172.4 662,173.1 663,173.1 663,172.2 664,172.2 664,174.0 665,174.0 665,175.7 666,175.7 666,174.2 667,174.2 667,176.3 668,176.3 668,175.5 669,175.5 669,178.5 670,178.5 670,179.1 671,179.1 671,180.1 672,180.1 672,179.1 673,179.1 673,182.0 674,182.0 674,182.6 675,182.6 675,183.1 676,183.1 676,184.9 677,184.9 677,186.0 678,186.0 678,186.8 679,186.8 679,188.2 680,188.2 680,187.1 681,187.1 681,188.4 682,188.4 682,191.4 683,191.4 683,191.0 684,191.0 684,193.7 685,193.7 685,195.3 686,195.3 686,196.6 687,196.6 687,198.0 688,198.0 688,199.4 689,199.4 689,201.1 690,201.1 690,202.5 691,202.5 691,202.5 692,202.5 692,205.5 693,205.5 693,206.6 694,206.6 694,208.8 695,208.8 695,210.0 696,210.0 696,210.4 697,210.4 697,213.6 698,213.6 698,215.2 699,215.2 699,215.4 700,215.4 700,218.6 701,218.6 701,220.2 702,220.2 702,220.5 703,220.5 703,222.7 704,222.7 704,225.6 705,225.6 705,227.2 706,227.2 706,229.5 707,229.5 707,231.6 708,231.6 708,233.2 709,233.2 709,235.1 710,235.1 710,237.3 711,237.3 711,238.8 712,238.8 712,241.3 713,241.3 713,242.6 714,242.6 714,244.7 715,244.7 715,245.6 716,245.6 716,249.0 717,249.0 717,248.6 718,248.6 718,251.9 719,251.9 719,255.1 720,255.1 720,255.9 721,255.9 721,257.4 722,257.4 722,261.0 723,261.0 723,262.5 724,262.5 724,264.2 725,264.2 725,266.6 726,266.6 726,268.9 727,268.9 727,270.8 728,270.8 728,273.0 729,273.0 729,274.9 730,274.9 730,276.7 731,276.7 731,278.4 732,278.4 732,280.6 733,280.6 733,281.9 734,281.9 734,283.8 733,283.8 733,285.9 732,285.9 732,288.6 731,288.6 731,290.8 730,290.8 730,293.4 729,293.4 729,295.7 728,295.7 728,298.1 727,298.1 727,301.5 726,301.5 726,302.8 725,302.8 725,306.4 724,306.4 724,308.4 723,308.4 723,310.6 722,310.6 722,312.5 721,312.5 721,314.5 720,314.5 720,316.9 719,316.9 719,318.6 718,318.6 718,321.1 717,321.1 717,324.3 716,324.3 716,325.3 715,325.3 715,329.1 714,329.1 714,329.2 713,329.2 713,332.0 712,332.0 712,333.7 711,333.7 711,337.1 710,337.1 710,337.7 709,337.7 709,340.0 708,340.0 708,342.5 707,342.5 707,343.6 706,343.6 706,345.9 705,345.9 705,347.9 704,347.9 704,349.4 703,349.4 703,353.7 702,353.7 702,353.6 701,353.6 701,354.7 700,354.7 700,356.6 699,356.6 699,358.8 698,358.8 698,360.9 697,360.9 697,363.5 696,363.5 696,363.3 695,363.3 695,367.3 694,367.3 694,366.6 693,366.6 693,368.6 692,368.6 692,371.2 691,371.2 691,371.6 690,371.6 690,373.6 689,373.6 689,374.4 688,374.4 688,377.3 687,377.3 687,378.3 686,378.3 686,379.8 685,379.8 685,379.9 684,379.9 684,382.3 683,382.3 683,382.4 682,382.4 682,384.3 681,384.3 681,386.3 680,386.3 680,386.0 679,386.0 679,387.4 678,387.4 678,388.7 677,388.7 677,389.4 676,389.4 676,391.0 675,391.0 675,392.8 674,392.8 674,393.2 673,393.2 673,393.8 672,393.8 672,394.3 671,394.3 671,395.3 670,395.3 670,395.9 669,395.9 669,397.2 668,397.2 668,398.8 667,398.8 667,397.8 666,397.8 666,399.6 665,399.6 665,400.8 664,400.8 664,400.2 663,400.2 663,401.7 662,401.7 662,400.9 661,400.9 661,402.9 660,402.9 660,402.2 659,402.2 659,403.1 658,403.1 658,403.0 657,403.0 657,403.1 656,403.1 656,402.9 655,402.9 655,403.1 654,403.1 654,404.0 653,404.0 653,403.7 652,403.7 652,403.5 651,403.5 651,403.8 650,403.8 650,403.7 649,403.7 649,405.0 648,405.0 648,404.3 647,404.3 647,403.2 646,403.2 646,403.6 645,403.6 645,404.6 644,404.6 644,402.5 643,402.5 643,403.7 642,403.7 642,402.1 641,402.1 641,401.6 640,401.6 640,401.4 639,401.4 639,400.6 638,400.6 638,402.9 637,402.9 637,399.9 636,399.9 636,399.4 635,399.4 635,399.4 634,399.4 634,397.8 633,397.8 633,397.2 632,397.2 632,396.7 631,396.7 631,395.7 630,395.7 630,394.8 629,394.8 629,395.2 628,395.2 628,393.5 627,393.5 627,394.4 626,394.4 626,391.7 625,391.7 625,392.2 624,392.2 624,389.6 623,389.6 623,390.3 622,390.3 622,387.2 621,387.2 621,386.3 620,386.3 620,384.8 619,384.8 619,384.7 618,384.7 618,382.6 617,382.6 617,380.9 616,380.9 616,382.3 615,382.3 615,379.0 614,379.0 614,377.4 613,377.4 613,376.4 612,376.4 612,374.4 611,374.4 611,373.6 610,373.6 610,371.4 609,371.4 609,369.8 608,369.8 608,369.3 607,369.3 607,367.8 606,367.8 606,366.3 605,366.3 605,363.9 604,363.9 604,363.4 603,363.4 603,360.2 602,360.2 602,360.5 601,360.5 601,356.7 600,356.7 600,357.3 599,357.3 599,353.4 598,353.4 598,352.8 597,352.8 597,350.7 596,350.7 596,347.3 595,347.3 595,345.7 594,345.7 594,345.2 593,345.2 593,342.1 592,342.1 592,339.9 591,339.9 591,339.5 590,339.5 590,338.1 589,338.1 589,333.9 588,333.9 588,332.6 587,332.6 587,330.9 586,330.9 586,329.4 585,329.4 585,326.0 584,326.0 584,323.9 583,323.9 583,321.9 582,321.9 582,319.5 581,319.5 581,319.9 580,319.9 580,315.3 579,315.3 579,313.5 578,313.5 578,311.0 577,311.0 577,309.1 576,309.1 576,307.2 575,307.2 575,304.8 574,304.8 574,302.3 573,302.3 573,300.0 572,300.0 572,298.1 571,298.1 571,296.1 570,296.1 570,293.6 569,293.6 569,291.9 568,291.9 568,289.2 567,289.2 567,289.1 566,289.1 566,291.3 565,291.3 565,293.2 564,293.2 564,295.3 563,295.3 563,298.4 562,298.4 562,300.5 561,300.5 561,303.4 560,303.4 560,304.1 559,304.1 559,306.6 558,306.6 558,309.9 557,309.9 557,310.8 556,310.8 556,312.9 555,312.9 555,314.9 554,314.9 554,317.6 553,317.6 553,319.2 552,319.2 552,321.3 551,321.3 551,324.4 550,324.4 550,325.1 549,325.1 549,327.5 548,327.5 548,331.2 547,331.2 547,332.6 546,332.6 546,334.6 545,334.6 545,335.9 544,335.9 544,337.5 543,337.5 543,339.7 542,339.7 542,341.3 541,341.3 541,343.6 540,343.6 540,345.1 539,345.1 539,347.3 538,347.3 538,349.1 537,349.1 537,350.8 536,350.8 536,353.6 535,353.6 535,354.2 534,354.2 534,356.5 533,356.5 533,357.7 532,357.7 532,359.4 531,359.4 531,361.1 530,361.1 530,365.8 529,365.8 529,364.5 528,364.5 528,368.0 527,368.0 527,370.1 526,370.1 526,369.5 525,369.5 525,371.0 524,371.0 524,373.1 523,373.1 523,373.7 522,373.7 522,375.5 521,375.5 521,378.9 520,378.9 520,380.0 519,380.0 519,381.9 518,381.9 518,380.6 517,380.6 517,381.9 516,381.9 516,383.2 515,383.2 515,384.8 514,384.8 514,386.0 513,386.0 513,388.1 512,388.1 512,389.7 511,389.7 511,389.0 510,389.0 510,390.4 509,390.4 509,393.3 508,393.3 508,394.4 507,394.4 507,393.0 506,393.0 506,395.9 505,395.9 505,394.5 504,394.5 504,397.6 503,397.6 503,396.7 502,396.7 502,397.3 501,397.3 501,398.1 500,398.1 500,398.4 499,398.4 499,399.3 498,399.3 498,399.8 497,399.8 497,401.2 496,401.2 496,401.1 495,401.1 495,403.1 494,403.1 494,402.8 493,402.8 493,403.1 492,403.1 492,403.0 491,403.0 491,403.6 490,403.6 490,403.1 489,403.1 489,404.7 488,404.7 488,404.8 487,404.8 487,405.4 486,405.4 486,403.6 485,403.6 485,405.3 484,405.3 484,405.5 483,405.5 483,404.9 482,404.9 482,405.0 481,405.0 481,403.7 480,403.7 480,404.7 479,404.7 479,403.7 478,403.7 478,403.8 477,403.8 477,402.6 476,402.6 476,403.4 475,403.4 475,402.3 474,402.3 474,403.5 473,403.5 473,402.2 472,402.2 472,401.9 471,401.9 471,400.2 470,400.2 470,399.3 469,399.3 469,401.4 468,401.4 468,398.4 467,398.4 467,397.4 466,397.4 466,399.0 465,399.0 465,396.3 464,396.3 464,395.4 463,395.4 463,396.6 462,396.6 462,393.8 461,393.8 461,393.8 460,393.8 460,393.7 459,393.7 459,390.5 458,390.5 458,389.7 457,389.7 457,389.4 456,389.4 456,388.9 455,388.9 455,386.6 454,386.6 454,385.6 453,385.6 453,385.5 452,385.5 452,383.0 451,383.0 451,384.2 450,384.2 450,380.3 449,380.3 449,379.3 448,379.3 448,378.8 447,378.8 447,377.9 446,377.9 446,374.8 445,374.8 445,375.8 444,375.8 444,372.7 443,372.7 443,370.4 442,370.4 442,370.2 441,370.2 441,368.7 440,368.7 440,366.1 439,366.1 439,363.7 438,363.7 438,362.0 437,362.0 437,361.8 436,361.8 436,360.4 435,360.4 435,358.5 434,358.5 434,356.8 433,356.8 433,354.4 432,354.4 432,351.4 431,351.4 431,350.0 430,350.0 430,349.3 429,349.3 429,347.7 428,347.7 428,344.6 427,344.6 427,342.1 426,342.1 426,340.2 425,340.2 425,338.0 424,338.0 424,335.9 423,335.9 423,335.3 422,335.3 422,334.3 421,334.3 421,330.5 420,330.5 420,327.9 419,327.9 419,326.2 418,326.2 418,323.6 417,323.6 417,321.6 416,321.6 416,319.0 415,319.0 415,318.3 414,318.3 414,316.7 413,316.7 413,313.0 412,313.0 412,310.6 411,310.6 411,308.7 410,308.7 410,307.2 409,307.2 409,303.6 408,303.6 408,301.1 407,301.1 407,298.4 406,298.4 406,296.2 405,296.2 405,293.8 404,293.8 404,291.6 403,291.6 403,288.8 402,288.8 402,286.4 401,286.4 401,283.9 400,283.9 400,285.9 399,285.9 399,288.4 398,288.4 398,290.9 397,290.9 397,293.7 396,293.7 396,296.6 395,296.6 395,298.1 394,298.1 394,300.3 393,300.3 393,303.6 392,303.6 392,305.0 391,305.0 391,307.7 390,307.7 390,310.5 389,310.5 389,312.2 388,312.2 388,315.3 387,315.3 387,318.1 386,318.1 386,318.7 385,318.7 385,320.6 384,320.6 384,323.1 383,323.1 383,326.6 382,326.6 382,327.7 381,327.7 381,331.4 380,331.4 380,332.0 379,332.0 379,334.1 378,334.1 378,335.9 377,335.9 377,337.5 376,337.5 376,340.4 375,340.4 375,342.0 374,342.0 374,344.0 373,344.0 373,346.4 372,346.4 372,347.5 371,347.5 371,349.2 370,349.2 370,352.6 369,352.6 369,353.2 368,353.2 368,356.9 367,356.9 367,358.7 366,358.7 366,359.2 365,359.2 365,361.0 364,361.0 364,361.6 363,361.6 363,363.8 362,363.8 362,366.1 361,366.1 361,367.7 360,367.7 360,370.2 359,370.2 359,371.1 358,371.1 358,371.8 357,371.8 357,375.1 356,375.1 356,374.3 355,374.3 355,376.4 354,376.4 354,377.6 353,377.6 353,380.1 352,380.1 352,380.2 351,380.2 351,381.4 350,381.4 350,384.2 349,384.2 349,385.8 348,385.8 348,385.0 347,385.0 347,386.9 346,386.9 346,387.6 345,387.6 345,388.7 344,388.7 344,391.5 343,391.5 343,390.9 342,390.9 342,392.2 341,392.2 341,393.6 340,393.6 340,393.5 339,393.5 339,394.8 338,394.8 338,395.5 337,395.5 337,396.0 336,396.0 336,396.4 335,396.4 335,397.9 334,397.9 334,397.9 333,397.9 333,401.3 332,401.3 332,399.2 331,399.2 331,400.9 330,400.9 330,400.5 329,400.5 329,403.4 328,403.4 328,402.1 327,402.1 327,402.1 326,402.1 326,404.2 325,404.2 325,402.7 324,402.7 324,402.7 323,402.7 323,403.3 322,403.3 322,403.1 321,403.1 321,405.4 320,405.4 320,405.5 319,405.5 319,405.2 318,405.2 318,403.9 317,403.9 317,403.5 316,403.5 316,403.7 315,403.7 315,403.4 314,403.4 314,403.3 313,403.3 313,404.2 312,404.2 312,403.4 311,403.4 311,403.4 310,403.4 310,402.5 309,402.5 309,402.1 308,402.1 308,401.9 307,401.9 307,401.5 306,401.5 306,400.9 305,400.9 305,401.7 304,401.7 304,399.6 303,399.6 303,399.4 302,399.4 302,400.7 301,400.7 301,400.1 300,400.1 300,399.3 299,399.3 299,396.7 298,396.7 298,397.8 297,397.8 297,395.0 296,395.0 296,395.8 295,395.8 295,393.5 294,393.5 294,394.7 293,394.7 293,391.8 292,391.8 292,390.7 291,390.7 291,389.4 290,389.4 290,388.3 289,388.3 289,387.2 288,387.2 288,385.9 287,385.9 287,385.2 286,385.2 286,383.6 285,383.6 285,382.4 284,382.4 284,381.5 283,381.5 283,380.2 282,380.2 282,378.3 281,378.3 281,378.7 280,378.7 280,376.1 279,376.1 279,376.6 278,376.6 278,374.4 277,374.4 277,371.1 276,371.1 276,369.7 275,369.7 275,369.5 274,369.5 274,366.9 273,366.9 273,365.3 272,365.3 272,365.6 271,365.6 271,362.4 270,362.4 270,360.8 269,360.8 269,358.1 268,358.1 268,357.6 267,357.6 267,354.9 266,354.9 266,353.0 265,353.0 265,351.7 264,351.7 264,349.7 263,349.7 263,347.7 262,347.7 262,346.3 261,346.3 261,345.4 260,345.4 260,341.6 259,341.6 259,340.9 258,340.9 258,337.7 257,337.7 257,336.4 256,336.4 256,335.3 255,335.3 255,331.7 254,331.7 254,329.8 253,329.8 253,327.8 252,327.8 252,327.6 251,327.6 251,326.2 250,326.2 250,322.0 249,322.0 249,321.6 248,321.6 248,319.4 247,319.4 247,315.2 246,315.2 246,314.3 245,314.3 245,310.9 244,310.9 244,309.5 243,309.5 243,306.7 242,306.7 242,305.6 241,305.6 241,302.7 240,302.7 240,300.4 239,300.4 239,298.0 238,298.0 238,295.9 237,295.9 237,293.5 236,293.5 236,291.4 235,291.4 235,289.2 234,289.2 234,289.2 233,289.2 233,291.1 232,291.1 232,293.5 231,293.5 231,295.4 230,295.4 230,298.2 229,298.2 229,299.8 228,299.8 228,302.4 227,302.4 227,304.8 226,304.8 226,306.2 225,306.2 225,308.7 224,308.7 224,310.4 223,310.4 223,312.9 222,312.9 222,316.4 221,316.4 221,316.8 220,316.8 220,318.9 219,318.9 219,321.5 218,321.5 218,323.5 217,323.5 217,325.3 216,325.3 216,328.3 215,328.3 215,329.4 214,329.4 214,331.9 213,331.9 213,333.5 212,333.5 212,337.5 211,337.5 211,339.9 210,339.9 210,339.3 209,339.3 209,343.1 208,343.1 208,343.2 207,343.2 207,345.4 206,345.4 206,347.9 205,347.9 205,349.8 204,349.8 204,351.1 203,351.1 203,352.8 202,352.8 202,356.0 201,356.0 201,356.6 200,356.6 200,358.1 199,358.1 199,361.9 198,361.9 198,363.6 197,363.6 197,365.1 196,365.1 196,364.5 195,364.5 195,366.3 194,366.3 194,368.0 193,368.0 193,369.2 192,369.2 192,370.8 191,370.8 191,373.4 190,373.4 190,376.3 189,376.3 189,375.2 188,375.2 188,376.6 187,376.6 187,379.3 186,379.3 186,380.0 185,380.0 185,382.4 184,382.4 184,382.0 183,382.0 183,385.3 182,385.3 182,386.3 181,386.3 181,387.2 180,387.2 180,388.5 179,388.5 179,388.1 178,388.1 178,390.8 177,390.8 177,390.6 176,390.6 176,391.0 175,391.0 175,392.1 174,392.1 174,393.4 173,393.4 173,394.0 172,394.0 172,395.5 171,395.5 171,396.1 170,396.1 170,396.4 169,396.4 169,398.8 168,398.8 168,398.7 167,398.7 167,398.4 166,398.4 166,400.7 165,400.7 165,400.3 164,400.3 164,400.6 163,400.6 163,400.8 162,400.8 162,401.2 161,401.2 161,401.3 160,401.3 160,401.9 159,401.9 159,402.2 158,402.2 158,402.5 157,402.5 157,403.3 156,403.3 156,405.0 155,405.0 155,405.6 154,405.6 154,403.4 153,403.4 153,405.7 152,405.7 152,405.4 151,405.4 151,404.6 150,404.6 150,405.8 149,405.8 149,404.2 148,404.2 148,403.5 147,403.5 147,403.1 146,403.1 146,403.2 145,403.2 145,403.4 144,403.4 144,405.2 143,405.2 143,403.0 142,403.0 142,403.0 141,403.0 141,401.7 140,401.7 140,403.1 139,403.1 139,402.3 138,402.3 138,400.9 137,400.9 137,400.2 136,400.2 136,400.3 135,400.3 135,398.6 134,398.6 134,399.2 133,399.2 133,397.7 132,397.7 132,397.8 131,397.8 131,395.6 130,395.6 130,397.0 129,397.0 129,394.7 128,394.7 128,393.7 127,393.7 127,392.5 126,392.5 126,393.0 125,393.0 125,391.5 124,391.5 124,389.7 123,389.7 123,390.1 122,390.1 122,387.6 121,387.6 121,388.3 120,388.3 120,386.5 119,386.5 119,384.5 118,384.5 118,383.8 117,383.8 117,382.1 116,382.1 116,380.6 115,380.6 115,379.0 114,379.0 114,378.3 113,378.3 113,376.6 112,376.6 112,375.1 111,375.1 111,375.1 110,375.1 110,372.5 109,372.5 109,372.0 108,372.0 108,370.0 107,370.0 107,367.9 106,367.9 106,368.1 105,368.1 105,364.4 104,364.4 104,363.0 103,363.0 103,361.6 102,361.6 102,359.6 101,359.6 101,358.3 100,358.3 100,356.0 99,356.0 99,354.3 98,354.3 98,353.0 97,353.0 97,352.4 96,352.4 96,349.6 95,349.6 95,348.0 94,348.0 94,345.6 93,345.6 93,343.8 92,343.8 92,343.5 91,343.5 91,341.6 90,341.6 90,338.5 89,338.5 89,336.4 88,336.4 88,334.4 87,334.4 87,333.0 86,333.0 86,332.7 85,332.7 85,329.2 84,329.2 84,326.8 83,326.8 83,324.5 82,324.5 82,323.1 81,323.1 81,321.4 80,321.4 80,318.0 79,318.0 79,316.8 78,316.8 78,314.2 77,314.2 77,312.2 76,312.2 76,309.7 75,309.7 75,308.1 74,308.1 74,305.8 73,305.8 73,303.5 72,303.5 72,301.6 71,301.6 71,298.0 70,298.0 70,294.3 69,294.3 69,291.3 68,291.3 68,288.0 67,288.0" fill="#000" shape-rendering="crispEdges"/>
<g stroke="#A0A0A0" stroke-width="1" fill="none" shape-rendering="crispEdges">
<rect x="67.5" y="164.5" width="666" height="245"/>
<line x1="67.5" y1="409" x2="67.5" y2="416.5"/>
<line x1="134.5" y1="409" x2="134.5" y2="416.5"/>
<line x1="200.5" y1="409" x2="200.5" y2="416.5"/>
<line x1="267.5" y1="409" x2="267.5" y2="416.5"/>
<line x1="333.5" y1="409" x2="333.5" y2="416.5"/>
<line x1="400.5" y1="409" x2="400.5" y2="416.5"/>
<line x1="467.5" y1="409" x2="467.5" y2="416.5"/>
<line x1="533.5" y1="409" x2="533.5" y2="416.5"/>
<line x1="600.5" y1="409" x2="600.5" y2="416.5"/>
<line x1="666.5" y1="409" x2="666.5" y2="416.5"/>
<line x1="733.5" y1="409" x2="733.5" y2="416.5"/>
<line x1="60" y1="164.5" x2="67" y2="164.5"/>
<line x1="60" y1="184.5" x2="67" y2="184.5"/>
<line x1="60" y1="205.5" x2="67" y2="205.5"/>
<line x1="60" y1="225.5" x2="67" y2="225.5"/>
<line x1="60" y1="246.5" x2="67" y2="246.5"/>
<line x1="60" y1="266.5" x2="67" y2="266.5"/>
<line x1="60" y1="286.5" x2="67" y2="286.5"/>
<line x1="60" y1="307.5" x2="67" y2="307.5"/>
<line x1="60" y1="327.5" x2="67" y2="327.5"/>
<line x1="60" y1="348.5" x2="67" y2="348.5"/>
<line x1="60" y1="368.5" x2="67" y2="368.5"/>
<line x1="60" y1="389.5" x2="67" y2="389.5"/>
<line x1="60" y1="409.5" x2="67" y2="409.5"/>
</g>
<text x="58.8" y="168.5" font-family='"Liberation Sans", sans-serif' font-size="13" font-weight="normal" fill="#A09CA2" text-anchor="end" stroke="#A09CA2" stroke-width="0.35">600mV</text>
<text x="58.8" y="188.5" font-family='"Liberation Sans", sans-serif' font-size="13" font-weight="normal" fill="#A09CA2" text-anchor="end" stroke="#A09CA2" stroke-width="0.35">500mV</text>
<text x="58.8" y="209.5" font-family='"Liberation Sans", sans-serif' font-size="13" font-weight="normal" fill="#A09CA2" text-anchor="end" stroke="#A09CA2" stroke-width="0.35">400mV</text>
<text x="58.8" y="229.5" font-family='"Liberation Sans", sans-serif' font-size="13" font-weight="normal" fill="#A09CA2" text-anchor="end" stroke="#A09CA2" stroke-width="0.35">300mV</text>
<text x="58.8" y="250.5" font-family='"Liberation Sans", sans-serif' font-size="13" font-weight="normal" fill="#A09CA2" text-anchor="end" stroke="#A09CA2" stroke-width="0.35">200mV</text>
<text x="58.8" y="270.5" font-family='"Liberation Sans", sans-serif' font-size="13" font-weight="normal" fill="#A09CA2" text-anchor="end" stroke="#A09CA2" stroke-width="0.35">100mV</text>
<text x="58.8" y="290.5" font-family='"Liberation Sans", sans-serif' font-size="13" font-weight="normal" fill="#A09CA2" text-anchor="end" stroke="#A09CA2" stroke-width="0.35">0mV</text>
<text x="58.8" y="311.5" font-family='"Liberation Sans", sans-serif' font-size="13" font-weight="normal" fill="#A09CA2" text-anchor="end" stroke="#A09CA2" stroke-width="0.35">-100mV</text>
<text x="58.8" y="331.5" font-family='"Liberation Sans", sans-serif' font-size="13" font-weight="normal" fill="#A09CA2" text-anchor="end" stroke="#A09CA2" stroke-width="0.35">-200mV</text>
<text x="58.8" y="352.5" font-family='"Liberation Sans", sans-serif' font-size="13" font-weight="normal" fill="#A09CA2" text-anchor="end" stroke="#A09CA2" stroke-width="0.35">-300mV</text>
<text x="58.8" y="372.5" font-family='"Liberation Sans", sans-serif' font-size="13" font-weight="normal" fill="#A09CA2" text-anchor="end" stroke="#A09CA2" stroke-width="0.35">-400mV</text>
<text x="58.8" y="393.5" font-family='"Liberation Sans", sans-serif' font-size="13" font-weight="normal" fill="#A09CA2" text-anchor="end" stroke="#A09CA2" stroke-width="0.35">-500mV</text>
<text x="58.8" y="413.5" font-family='"Liberation Sans", sans-serif' font-size="13" font-weight="normal" fill="#A09CA2" text-anchor="end" stroke="#A09CA2" stroke-width="0.35">-600mV</text>
<text x="67.5" y="429.4" font-family='"Liberation Sans", sans-serif' font-size="13" font-weight="normal" fill="#A09CA2" text-anchor="middle" stroke="#A09CA2" stroke-width="0.35">0.0ms</text>
<text x="134.5" y="429.4" font-family='"Liberation Sans", sans-serif' font-size="13" font-weight="normal" fill="#A09CA2" text-anchor="middle" stroke="#A09CA2" stroke-width="0.35">0.2ms</text>
<text x="200.5" y="429.4" font-family='"Liberation Sans", sans-serif' font-size="13" font-weight="normal" fill="#A09CA2" text-anchor="middle" stroke="#A09CA2" stroke-width="0.35">0.4ms</text>
<text x="267.5" y="429.4" font-family='"Liberation Sans", sans-serif' font-size="13" font-weight="normal" fill="#A09CA2" text-anchor="middle" stroke="#A09CA2" stroke-width="0.35">0.6ms</text>
<text x="333.5" y="429.4" font-family='"Liberation Sans", sans-serif' font-size="13" font-weight="normal" fill="#A09CA2" text-anchor="middle" stroke="#A09CA2" stroke-width="0.35">0.8ms</text>
<text x="400.5" y="429.4" font-family='"Liberation Sans", sans-serif' font-size="13" font-weight="normal" fill="#A09CA2" text-anchor="middle" stroke="#A09CA2" stroke-width="0.35">1.0ms</text>
<text x="467.5" y="429.4" font-family='"Liberation Sans", sans-serif' font-size="13" font-weight="normal" fill="#A09CA2" text-anchor="middle" stroke="#A09CA2" stroke-width="0.35">1.2ms</text>
<text x="533.5" y="429.4" font-family='"Liberation Sans", sans-serif' font-size="13" font-weight="normal" fill="#A09CA2" text-anchor="middle" stroke="#A09CA2" stroke-width="0.35">1.4ms</text>
<text x="600.5" y="429.4" font-family='"Liberation Sans", sans-serif' font-size="13" font-weight="normal" fill="#A09CA2" text-anchor="middle" stroke="#A09CA2" stroke-width="0.35">1.6ms</text>
<text x="666.5" y="429.4" font-family='"Liberation Sans", sans-serif' font-size="13" font-weight="normal" fill="#A09CA2" text-anchor="middle" stroke="#A09CA2" stroke-width="0.35">1.8ms</text>
<text x="750.7" y="429.4" font-family='"Liberation Sans", sans-serif' font-size="13" font-weight="normal" fill="#A09CA2" text-anchor="end" stroke="#A09CA2" stroke-width="0.35">2.0ms</text>
<text x="377.4" y="158.8" font-family='"Liberation Sans", sans-serif' font-size="13" font-weight="bold" fill="#000" text-anchor="start" textLength="45.5" lengthAdjust="spacingAndGlyphs" >V(n002)</text>
<path d="M3.500 776.5 V449.5 Q3.500 445.5 7.500 445.5 H756.500 Q760.500 445.5 760.500 449.5 V776.5 Z" fill="#BAD0EA" stroke="#000000" stroke-width="1"/>
<path d="M4 476 V449.5 Q4 446 7.500 446 H756.500 Q760 446 760 449.5 V476 Z" fill="url(#g2)"/>
<path d="M4.500 776 V449.5 Q4.500 446.5 7.500 446.5 H756.500 Q759.500 446.5 759.500 449.5" fill="none" stroke="#FFFFFF" stroke-width="1" stroke-opacity="0.95"/>
<rect x="759" y="449" width="1" height="327" fill="#3FD0FA" />
<rect x="4" y="775" width="756" height="1" fill="#3FD0FA" />
<rect x="3" y="776" width="758" height="1" fill="#000" />
<rect x="11" y="476" width="742" height="1" fill="#8E8E8E" />
<rect x="11" y="476" width="1" height="293" fill="#8E8E8E" />
<rect x="12" y="477" width="740" height="1" fill="#696969" />
<rect x="12" y="477" width="1" height="291" fill="#696969" />
<rect x="752" y="476" width="1" height="293" fill="#FFFFFF" />
<rect x="11" y="768" width="742" height="1" fill="#FFFFFF" />
<rect x="751" y="477" width="1" height="291" fill="#F1F1F1" />
<rect x="12" y="767" width="740" height="1" fill="#F1F1F1" />
<g fill="none" stroke="#0000FF"><path d="M15 463.5 H18.5" stroke-width="1.300"/><path d="M19.2 459 V468" stroke-width="2"/><path d="M20 461.5 L25 456.5" stroke-width="1"/><path d="M20 465.5 L26 471.5" stroke-width="1"/><path d="M22 469.8 L24.8 470.3 L24.3 467.5 Z" fill="#0000FF" stroke-width="0.600"/></g>
<text x="33.5" y="468.6" font-family='"Liberation Sans", sans-serif' font-size="12" font-weight="normal" fill="#000" text-anchor="start" textLength="30.5" lengthAdjust="spacingAndGlyphs" >Draft1</text>
<rect x="651.5" y="455.5" width="30.5" height="17" rx="2.500" fill="url(#b2)" stroke="#7087A8" stroke-width="1"/>
<rect x="652.5" y="456.5" width="28.5" height="15" rx="1.800" fill="none" stroke="#fff" stroke-opacity="0.450" stroke-width="1"/>
<rect x="685.5" y="455.5" width="30.5" height="17" rx="2.500" fill="url(#b2)" stroke="#7087A8" stroke-width="1"/>
<rect x="686.5" y="456.5" width="28.5" height="15" rx="1.800" fill="none" stroke="#fff" stroke-opacity="0.450" stroke-width="1"/>
<rect x="719.5" y="455.5" width="31.0" height="17" rx="2.500" fill="url(#b3)" stroke="#7A3426" stroke-width="1"/>
<rect x="720.5" y="456.5" width="29.0" height="15" rx="1.800" fill="none" stroke="#fff" stroke-opacity="0.450" stroke-width="1"/>
<rect x="661" y="463.5" width="11.500" height="3.800" rx="1" fill="#fff" stroke="#6B7280" stroke-width="0.900"/>
<rect x="695.500" y="459.5" width="10.500" height="7.800" rx="0.800" fill="#fff" stroke="#6B7280" stroke-width="0.900"/>
<rect x="698.300" y="462.2" width="4.900" height="2.600" fill="#8FA6C6" stroke="#6B7280" stroke-width="0.800"/>
<path d="M731.3000000000001 460.40000000000003 L738.1 466.2 M738.1 460.40000000000003 L731.3000000000001 466.2" stroke="#5A2A22" stroke-width="4.200" stroke-linecap="square"/>
<path d="M731.3000000000001 460.40000000000003 L738.1 466.2 M738.1 460.40000000000003 L731.3000000000001 466.2" stroke="#fff" stroke-width="2.500" stroke-linecap="square"/>
<rect x="13" y="478" width="738" height="289" fill="#C0C0C0" />
<path d="M16 489h1v1h-1zM16 505h1v1h-1zM16 521h1v1h-1zM16 537h1v1h-1zM16 553h1v1h-1zM16 570h1v1h-1zM16 586h1v1h-1zM16 602h1v1h-1zM16 618h1v1h-1zM16 634h1v1h-1zM16 651h1v1h-1zM16 667h1v1h-1zM16 683h1v1h-1zM16 699h1v1h-1zM16 715h1v1h-1zM16 732h1v1h-1zM16 748h1v1h-1zM16 764h1v1h-1zM32 489h1v1h-1zM32 505h1v1h-1zM32 521h1v1h-1zM32 537h1v1h-1zM32 553h1v1h-1zM32 570h1v1h-1zM32 586h1v1h-1zM32 602h1v1h-1zM32 618h1v1h-1zM32 634h1v1h-1zM32 651h1v1h-1zM32 667h1v1h-1zM32 683h1v1h-1zM32 699h1v1h-1zM32 715h1v1h-1zM32 732h1v1h-1zM32 748h1v1h-1zM32 764h1v1h-1zM48 489h1v1h-1zM48 505h1v1h-1zM48 521h1v1h-1zM48 537h1v1h-1zM48 553h1v1h-1zM48 570h1v1h-1zM48 586h1v1h-1zM48 602h1v1h-1zM48 618h1v1h-1zM48 634h1v1h-1zM48 651h1v1h-1zM48 667h1v1h-1zM48 683h1v1h-1zM48 699h1v1h-1zM48 715h1v1h-1zM48 732h1v1h-1zM48 748h1v1h-1zM48 764h1v1h-1zM65 489h1v1h-1zM65 505h1v1h-1zM65 521h1v1h-1zM65 537h1v1h-1zM65 553h1v1h-1zM65 570h1v1h-1zM65 586h1v1h-1zM65 602h1v1h-1zM65 618h1v1h-1zM65 634h1v1h-1zM65 651h1v1h-1zM65 667h1v1h-1zM65 683h1v1h-1zM65 699h1v1h-1zM65 715h1v1h-1zM65 732h1v1h-1zM65 748h1v1h-1zM65 764h1v1h-1zM81 489h1v1h-1zM81 505h1v1h-1zM81 521h1v1h-1zM81 537h1v1h-1zM81 553h1v1h-1zM81 570h1v1h-1zM81 586h1v1h-1zM81 602h1v1h-1zM81 618h1v1h-1zM81 634h1v1h-1zM81 651h1v1h-1zM81 667h1v1h-1zM81 683h1v1h-1zM81 699h1v1h-1zM81 715h1v1h-1zM81 732h1v1h-1zM81 748h1v1h-1zM81 764h1v1h-1zM97 489h1v1h-1zM97 505h1v1h-1zM97 521h1v1h-1zM97 537h1v1h-1zM97 553h1v1h-1zM97 570h1v1h-1zM97 586h1v1h-1zM97 602h1v1h-1zM97 618h1v1h-1zM97 634h1v1h-1zM97 651h1v1h-1zM97 667h1v1h-1zM97 683h1v1h-1zM97 699h1v1h-1zM97 715h1v1h-1zM97 732h1v1h-1zM97 748h1v1h-1zM97 764h1v1h-1zM113 489h1v1h-1zM113 505h1v1h-1zM113 521h1v1h-1zM113 537h1v1h-1zM113 553h1v1h-1zM113 570h1v1h-1zM113 586h1v1h-1zM113 602h1v1h-1zM113 618h1v1h-1zM113 634h1v1h-1zM113 651h1v1h-1zM113 667h1v1h-1zM113 683h1v1h-1zM113 699h1v1h-1zM113 715h1v1h-1zM113 732h1v1h-1zM113 748h1v1h-1zM113 764h1v1h-1zM129 489h1v1h-1zM129 505h1v1h-1zM129 521h1v1h-1zM129 537h1v1h-1zM129 553h1v1h-1zM129 570h1v1h-1zM129 586h1v1h-1zM129 602h1v1h-1zM129 618h1v1h-1zM129 634h1v1h-1zM129 651h1v1h-1zM129 667h1v1h-1zM129 683h1v1h-1zM129 699h1v1h-1zM129 715h1v1h-1zM129 732h1v1h-1zM129 748h1v1h-1zM129 764h1v1h-1zM146 489h1v1h-1zM146 505h1v1h-1zM146 521h1v1h-1zM146 537h1v1h-1zM146 553h1v1h-1zM146 570h1v1h-1zM146 586h1v1h-1zM146 602h1v1h-1zM146 618h1v1h-1zM146 634h1v1h-1zM146 651h1v1h-1zM146 667h1v1h-1zM146 683h1v1h-1zM146 699h1v1h-1zM146 715h1v1h-1zM146 732h1v1h-1zM146 748h1v1h-1zM146 764h1v1h-1zM162 489h1v1h-1zM162 505h1v1h-1zM162 521h1v1h-1zM162 537h1v1h-1zM162 553h1v1h-1zM162 570h1v1h-1zM162 586h1v1h-1zM162 602h1v1h-1zM162 618h1v1h-1zM162 634h1v1h-1zM162 651h1v1h-1zM162 667h1v1h-1zM162 683h1v1h-1zM162 699h1v1h-1zM162 715h1v1h-1zM162 732h1v1h-1zM162 748h1v1h-1zM162 764h1v1h-1zM178 489h1v1h-1zM178 505h1v1h-1zM178 521h1v1h-1zM178 537h1v1h-1zM178 553h1v1h-1zM178 570h1v1h-1zM178 586h1v1h-1zM178 602h1v1h-1zM178 618h1v1h-1zM178 634h1v1h-1zM178 651h1v1h-1zM178 667h1v1h-1zM178 683h1v1h-1zM178 699h1v1h-1zM178 715h1v1h-1zM178 732h1v1h-1zM178 748h1v1h-1zM178 764h1v1h-1zM194 489h1v1h-1zM194 505h1v1h-1zM194 521h1v1h-1zM194 537h1v1h-1zM194 553h1v1h-1zM194 570h1v1h-1zM194 586h1v1h-1zM194 602h1v1h-1zM194 618h1v1h-1zM194 634h1v1h-1zM194 651h1v1h-1zM194 667h1v1h-1zM194 683h1v1h-1zM194 699h1v1h-1zM194 715h1v1h-1zM194 732h1v1h-1zM194 748h1v1h-1zM194 764h1v1h-1zM210 489h1v1h-1zM210 505h1v1h-1zM210 521h1v1h-1zM210 537h1v1h-1zM210 553h1v1h-1zM210 570h1v1h-1zM210 586h1v1h-1zM210 602h1v1h-1zM210 618h1v1h-1zM210 634h1v1h-1zM210 651h1v1h-1zM210 667h1v1h-1zM210 683h1v1h-1zM210 699h1v1h-1zM210 715h1v1h-1zM210 732h1v1h-1zM210 748h1v1h-1zM210 764h1v1h-1zM227 489h1v1h-1zM227 505h1v1h-1zM227 521h1v1h-1zM227 537h1v1h-1zM227 553h1v1h-1zM227 570h1v1h-1zM227 586h1v1h-1zM227 602h1v1h-1zM227 618h1v1h-1zM227 634h1v1h-1zM227 651h1v1h-1zM227 667h1v1h-1zM227 683h1v1h-1zM227 699h1v1h-1zM227 715h1v1h-1zM227 732h1v1h-1zM227 748h1v1h-1zM227 764h1v1h-1zM243 489h1v1h-1zM243 505h1v1h-1zM243 521h1v1h-1zM243 537h1v1h-1zM243 553h1v1h-1zM243 570h1v1h-1zM243 586h1v1h-1zM243 602h1v1h-1zM243 618h1v1h-1zM243 634h1v1h-1zM243 651h1v1h-1zM243 667h1v1h-1zM243 683h1v1h-1zM243 699h1v1h-1zM243 715h1v1h-1zM243 732h1v1h-1zM243 748h1v1h-1zM243 764h1v1h-1zM259 489h1v1h-1zM259 505h1v1h-1zM259 521h1v1h-1zM259 537h1v1h-1zM259 553h1v1h-1zM259 570h1v1h-1zM259 586h1v1h-1zM259 602h1v1h-1zM259 618h1v1h-1zM259 634h1v1h-1zM259 651h1v1h-1zM259 667h1v1h-1zM259 683h1v1h-1zM259 699h1v1h-1zM259 715h1v1h-1zM259 732h1v1h-1zM259 748h1v1h-1zM259 764h1v1h-1zM275 489h1v1h-1zM275 505h1v1h-1zM275 521h1v1h-1zM275 537h1v1h-1zM275 553h1v1h-1zM275 570h1v1h-1zM275 586h1v1h-1zM275 602h1v1h-1zM275 618h1v1h-1zM275 634h1v1h-1zM275 651h1v1h-1zM275 667h1v1h-1zM275 683h1v1h-1zM275 699h1v1h-1zM275 715h1v1h-1zM275 732h1v1h-1zM275 748h1v1h-1zM275 764h1v1h-1zM291 489h1v1h-1zM291 505h1v1h-1zM291 521h1v1h-1zM291 537h1v1h-1zM291 553h1v1h-1zM291 570h1v1h-1zM291 586h1v1h-1zM291 602h1v1h-1zM291 618h1v1h-1zM291 634h1v1h-1zM291 651h1v1h-1zM291 667h1v1h-1zM291 683h1v1h-1zM291 699h1v1h-1zM291 715h1v1h-1zM291 732h1v1h-1zM291 748h1v1h-1zM291 764h1v1h-1zM308 489h1v1h-1zM308 505h1v1h-1zM308 521h1v1h-1zM308 537h1v1h-1zM308 553h1v1h-1zM308 570h1v1h-1zM308 586h1v1h-1zM308 602h1v1h-1zM308 618h1v1h-1zM308 634h1v1h-1zM308 651h1v1h-1zM308 667h1v1h-1zM308 683h1v1h-1zM308 699h1v1h-1zM308 715h1v1h-1zM308 732h1v1h-1zM308 748h1v1h-1zM308 764h1v1h-1zM324 489h1v1h-1zM324 505h1v1h-1zM324 521h1v1h-1zM324 537h1v1h-1zM324 553h1v1h-1zM324 570h1v1h-1zM324 586h1v1h-1zM324 602h1v1h-1zM324 618h1v1h-1zM324 634h1v1h-1zM324 651h1v1h-1zM324 667h1v1h-1zM324 683h1v1h-1zM324 699h1v1h-1zM324 715h1v1h-1zM324 732h1v1h-1zM324 748h1v1h-1zM324 764h1v1h-1zM340 489h1v1h-1zM340 505h1v1h-1zM340 521h1v1h-1zM340 537h1v1h-1zM340 553h1v1h-1zM340 570h1v1h-1zM340 586h1v1h-1zM340 602h1v1h-1zM340 618h1v1h-1zM340 634h1v1h-1zM340 651h1v1h-1zM340 667h1v1h-1zM340 683h1v1h-1zM340 699h1v1h-1zM340 715h1v1h-1zM340 732h1v1h-1zM340 748h1v1h-1zM340 764h1v1h-1zM356 489h1v1h-1zM356 505h1v1h-1zM356 521h1v1h-1zM356 537h1v1h-1zM356 553h1v1h-1zM356 570h1v1h-1zM356 586h1v1h-1zM356 602h1v1h-1zM356 618h1v1h-1zM356 634h1v1h-1zM356 651h1v1h-1zM356 667h1v1h-1zM356 683h1v1h-1zM356 699h1v1h-1zM356 715h1v1h-1zM356 732h1v1h-1zM356 748h1v1h-1zM356 764h1v1h-1zM372 489h1v1h-1zM372 505h1v1h-1zM372 521h1v1h-1zM372 537h1v1h-1zM372 553h1v1h-1zM372 570h1v1h-1zM372 586h1v1h-1zM372 602h1v1h-1zM372 618h1v1h-1zM372 634h1v1h-1zM372 651h1v1h-1zM372 667h1v1h-1zM372 683h1v1h-1zM372 699h1v1h-1zM372 715h1v1h-1zM372 732h1v1h-1zM372 748h1v1h-1zM372 764h1v1h-1zM389 489h1v1h-1zM389 505h1v1h-1zM389 521h1v1h-1zM389 537h1v1h-1zM389 553h1v1h-1zM389 570h1v1h-1zM389 586h1v1h-1zM389 602h1v1h-1zM389 618h1v1h-1zM389 634h1v1h-1zM389 651h1v1h-1zM389 667h1v1h-1zM389 683h1v1h-1zM389 699h1v1h-1zM389 715h1v1h-1zM389 732h1v1h-1zM389 748h1v1h-1zM389 764h1v1h-1zM405 489h1v1h-1zM405 505h1v1h-1zM405 521h1v1h-1zM405 537h1v1h-1zM405 553h1v1h-1zM405 570h1v1h-1zM405 586h1v1h-1zM405 602h1v1h-1zM405 618h1v1h-1zM405 634h1v1h-1zM405 651h1v1h-1zM405 667h1v1h-1zM405 683h1v1h-1zM405 699h1v1h-1zM405 715h1v1h-1zM405 732h1v1h-1zM405 748h1v1h-1zM405 764h1v1h-1zM421 489h1v1h-1zM421 505h1v1h-1zM421 521h1v1h-1zM421 537h1v1h-1zM421 553h1v1h-1zM421 570h1v1h-1zM421 586h1v1h-1zM421 602h1v1h-1zM421 618h1v1h-1zM421 634h1v1h-1zM421 651h1v1h-1zM421 667h1v1h-1zM421 683h1v1h-1zM421 699h1v1h-1zM421 715h1v1h-1zM421 732h1v1h-1zM421 748h1v1h-1zM421 764h1v1h-1zM437 489h1v1h-1zM437 505h1v1h-1zM437 521h1v1h-1zM437 537h1v1h-1zM437 553h1v1h-1zM437 570h1v1h-1zM437 586h1v1h-1zM437 602h1v1h-1zM437 618h1v1h-1zM437 634h1v1h-1zM437 651h1v1h-1zM437 667h1v1h-1zM437 683h1v1h-1zM437 699h1v1h-1zM437 715h1v1h-1zM437 732h1v1h-1zM437 748h1v1h-1zM437 764h1v1h-1zM453 489h1v1h-1zM453 505h1v1h-1zM453 521h1v1h-1zM453 537h1v1h-1zM453 553h1v1h-1zM453 570h1v1h-1zM453 586h1v1h-1zM453 602h1v1h-1zM453 618h1v1h-1zM453 634h1v1h-1zM453 651h1v1h-1zM453 667h1v1h-1zM453 683h1v1h-1zM453 699h1v1h-1zM453 715h1v1h-1zM453 732h1v1h-1zM453 748h1v1h-1zM453 764h1v1h-1zM470 489h1v1h-1zM470 505h1v1h-1zM470 521h1v1h-1zM470 537h1v1h-1zM470 553h1v1h-1zM470 570h1v1h-1zM470 586h1v1h-1zM470 602h1v1h-1zM470 618h1v1h-1zM470 634h1v1h-1zM470 651h1v1h-1zM470 667h1v1h-1zM470 683h1v1h-1zM470 699h1v1h-1zM470 715h1v1h-1zM470 732h1v1h-1zM470 748h1v1h-1zM470 764h1v1h-1zM486 489h1v1h-1zM486 505h1v1h-1zM486 521h1v1h-1zM486 537h1v1h-1zM486 553h1v1h-1zM486 570h1v1h-1zM486 586h1v1h-1zM486 602h1v1h-1zM486 618h1v1h-1zM486 634h1v1h-1zM486 651h1v1h-1zM486 667h1v1h-1zM486 683h1v1h-1zM486 699h1v1h-1zM486 715h1v1h-1zM486 732h1v1h-1zM486 748h1v1h-1zM486 764h1v1h-1zM502 489h1v1h-1zM502 505h1v1h-1zM502 521h1v1h-1zM502 537h1v1h-1zM502 553h1v1h-1zM502 570h1v1h-1zM502 586h1v1h-1zM502 602h1v1h-1zM502 618h1v1h-1zM502 634h1v1h-1zM502 651h1v1h-1zM502 667h1v1h-1zM502 683h1v1h-1zM502 699h1v1h-1zM502 715h1v1h-1zM502 732h1v1h-1zM502 748h1v1h-1zM502 764h1v1h-1zM518 489h1v1h-1zM518 505h1v1h-1zM518 521h1v1h-1zM518 537h1v1h-1zM518 553h1v1h-1zM518 570h1v1h-1zM518 586h1v1h-1zM518 602h1v1h-1zM518 618h1v1h-1zM518 634h1v1h-1zM518 651h1v1h-1zM518 667h1v1h-1zM518 683h1v1h-1zM518 699h1v1h-1zM518 715h1v1h-1zM518 732h1v1h-1zM518 748h1v1h-1zM518 764h1v1h-1zM534 489h1v1h-1zM534 505h1v1h-1zM534 521h1v1h-1zM534 537h1v1h-1zM534 553h1v1h-1zM534 570h1v1h-1zM534 586h1v1h-1zM534 602h1v1h-1zM534 618h1v1h-1zM534 634h1v1h-1zM534 651h1v1h-1zM534 667h1v1h-1zM534 683h1v1h-1zM534 699h1v1h-1zM534 715h1v1h-1zM534 732h1v1h-1zM534 748h1v1h-1zM534 764h1v1h-1zM551 489h1v1h-1zM551 505h1v1h-1zM551 521h1v1h-1zM551 537h1v1h-1zM551 553h1v1h-1zM551 570h1v1h-1zM551 586h1v1h-1zM551 602h1v1h-1zM551 618h1v1h-1zM551 634h1v1h-1zM551 651h1v1h-1zM551 667h1v1h-1zM551 683h1v1h-1zM551 699h1v1h-1zM551 715h1v1h-1zM551 732h1v1h-1zM551 748h1v1h-1zM551 764h1v1h-1zM567 489h1v1h-1zM567 505h1v1h-1zM567 521h1v1h-1zM567 537h1v1h-1zM567 553h1v1h-1zM567 570h1v1h-1zM567 586h1v1h-1zM567 602h1v1h-1zM567 618h1v1h-1zM567 634h1v1h-1zM567 651h1v1h-1zM567 667h1v1h-1zM567 683h1v1h-1zM567 699h1v1h-1zM567 715h1v1h-1zM567 732h1v1h-1zM567 748h1v1h-1zM567 764h1v1h-1zM583 489h1v1h-1zM583 505h1v1h-1zM583 521h1v1h-1zM583 537h1v1h-1zM583 553h1v1h-1zM583 570h1v1h-1zM583 586h1v1h-1zM583 602h1v1h-1zM583 618h1v1h-1zM583 634h1v1h-1zM583 651h1v1h-1zM583 667h1v1h-1zM583 683h1v1h-1zM583 699h1v1h-1zM583 715h1v1h-1zM583 732h1v1h-1zM583 748h1v1h-1zM583 764h1v1h-1zM599 489h1v1h-1zM599 505h1v1h-1zM599 521h1v1h-1zM599 537h1v1h-1zM599 553h1v1h-1zM599 570h1v1h-1zM599 586h1v1h-1zM599 602h1v1h-1zM599 618h1v1h-1zM599 634h1v1h-1zM599 651h1v1h-1zM599 667h1v1h-1zM599 683h1v1h-1zM599 699h1v1h-1zM599 715h1v1h-1zM599 732h1v1h-1zM599 748h1v1h-1zM599 764h1v1h-1zM615 489h1v1h-1zM615 505h1v1h-1zM615 521h1v1h-1zM615 537h1v1h-1zM615 553h1v1h-1zM615 570h1v1h-1zM615 586h1v1h-1zM615 602h1v1h-1zM615 618h1v1h-1zM615 634h1v1h-1zM615 651h1v1h-1zM615 667h1v1h-1zM615 683h1v1h-1zM615 699h1v1h-1zM615 715h1v1h-1zM615 732h1v1h-1zM615 748h1v1h-1zM615 764h1v1h-1zM632 489h1v1h-1zM632 505h1v1h-1zM632 521h1v1h-1zM632 537h1v1h-1zM632 553h1v1h-1zM632 570h1v1h-1zM632 586h1v1h-1zM632 602h1v1h-1zM632 618h1v1h-1zM632 634h1v1h-1zM632 651h1v1h-1zM632 667h1v1h-1zM632 683h1v1h-1zM632 699h1v1h-1zM632 715h1v1h-1zM632 732h1v1h-1zM632 748h1v1h-1zM632 764h1v1h-1zM648 489h1v1h-1zM648 505h1v1h-1zM648 521h1v1h-1zM648 537h1v1h-1zM648 553h1v1h-1zM648 570h1v1h-1zM648 586h1v1h-1zM648 602h1v1h-1zM648 618h1v1h-1zM648 634h1v1h-1zM648 651h1v1h-1zM648 667h1v1h-1zM648 683h1v1h-1zM648 699h1v1h-1zM648 715h1v1h-1zM648 732h1v1h-1zM648 748h1v1h-1zM648 764h1v1h-1zM664 489h1v1h-1zM664 505h1v1h-1zM664 521h1v1h-1zM664 537h1v1h-1zM664 553h1v1h-1zM664 570h1v1h-1zM664 586h1v1h-1zM664 602h1v1h-1zM664 618h1v1h-1zM664 634h1v1h-1zM664 651h1v1h-1zM664 667h1v1h-1zM664 683h1v1h-1zM664 699h1v1h-1zM664 715h1v1h-1zM664 732h1v1h-1zM664 748h1v1h-1zM664 764h1v1h-1zM680 489h1v1h-1zM680 505h1v1h-1zM680 521h1v1h-1zM680 537h1v1h-1zM680 553h1v1h-1zM680 570h1v1h-1zM680 586h1v1h-1zM680 602h1v1h-1zM680 618h1v1h-1zM680 634h1v1h-1zM680 651h1v1h-1zM680 667h1v1h-1zM680 683h1v1h-1zM680 699h1v1h-1zM680 715h1v1h-1zM680 732h1v1h-1zM680 748h1v1h-1zM680 764h1v1h-1zM696 489h1v1h-1zM696 505h1v1h-1zM696 521h1v1h-1zM696 537h1v1h-1zM696 553h1v1h-1zM696 570h1v1h-1zM696 586h1v1h-1zM696 602h1v1h-1zM696 618h1v1h-1zM696 634h1v1h-1zM696 651h1v1h-1zM696 667h1v1h-1zM696 683h1v1h-1zM696 699h1v1h-1zM696 715h1v1h-1zM696 732h1v1h-1zM696 748h1v1h-1zM696 764h1v1h-1zM713 489h1v1h-1zM713 505h1v1h-1zM713 521h1v1h-1zM713 537h1v1h-1zM713 553h1v1h-1zM713 570h1v1h-1zM713 586h1v1h-1zM713 602h1v1h-1zM713 618h1v1h-1zM713 634h1v1h-1zM713 651h1v1h-1zM713 667h1v1h-1zM713 683h1v1h-1zM713 699h1v1h-1zM713 715h1v1h-1zM713 732h1v1h-1zM713 748h1v1h-1zM713 764h1v1h-1zM729 489h1v1h-1zM729 505h1v1h-1zM729 521h1v1h-1zM729 537h1v1h-1zM729 553h1v1h-1zM729 570h1v1h-1zM729 586h1v1h-1zM729 602h1v1h-1zM729 618h1v1h-1zM729 634h1v1h-1zM729 651h1v1h-1zM729 667h1v1h-1zM729 683h1v1h-1zM729 699h1v1h-1zM729 715h1v1h-1zM729 732h1v1h-1zM729 748h1v1h-1zM729 764h1v1h-1zM745 489h1v1h-1zM745 505h1v1h-1zM745 521h1v1h-1zM745 537h1v1h-1zM745 553h1v1h-1zM745 570h1v1h-1zM745 586h1v1h-1zM745 602h1v1h-1zM745 618h1v1h-1zM745 634h1v1h-1zM745 651h1v1h-1zM745 667h1v1h-1zM745 683h1v1h-1zM745 699h1v1h-1zM745 715h1v1h-1zM745 732h1v1h-1zM745 748h1v1h-1zM745 764h1v1h-1z" fill="#000" shape-rendering="crispEdges"/>
<path d="M97.5 578 L97.5 562.5 L154.5 562.5 M195 562.5 L219.5 562.5 M97.5 618.5 L97.5 634.5 L219.5 634.5 M138.5 562.5 L138.5 586.5 M138.5 618.5 L138.5 667.5 M202.5 562.5 L202.5 586.5 M202.5 618.5 L202.5 634.5 M251.5 562.5 L251.5 586.5 L267.5 586.5 M251.5 634.5 L251.5 618.5 L267.5 618.5 M308.5 586.5 L324.5 586.5 L324.5 537.5 L518.5 537.5 L518.5 554 M308.5 618.5 L324.5 618.5 L324.5 667.5 L518.5 667.5 L518.5 651 M413.5 537.5 L413.5 554 M413.5 594 L413.5 611 M413.5 651 L413.5 667.5 M518.5 594 L518.5 611 M518.5 602.5 L591.5 602.5 L591.5 604 M445.5 602.5 L364.5 602.5 L364.5 610.5 M437.5 562.5 L495 562.5 M437.5 586.5 L495 586.5 M437.5 618.5 L495 618.5 M437.5 643.5 L495 643.5 M445.5 586.5 L445.5 618.5 M461.5 562.5 L461.5 683.5 M591.5 643 L591.5 651.5 M461.5 724 L461.5 732.5" fill="none" stroke="#0000FF" stroke-width="1" shape-rendering="crispEdges"/>
<path d="M130.0 667.5 H147.0 L138.5 676.0 Z M355.5 610.5 H373.5 L364.5 619.5 Z M582.5 651.5 H600.5 L591.5 660.5 Z M452.5 732.5 H470.5 L461.5 741.5 Z" fill="none" stroke="#0000FF" stroke-width="0.75" shape-rendering="crispEdges"/>
<path d="M97.500 578 V582 L89.500 586.500 L105.500 594.500 L89.500 602.500 L105.500 610.500 L97.500 614.500 V618.500 M138.5 586.500 V600.500 M130.0 600.500 H147.0 M130.0 604.500 H147.0 M138.5 604.500 V618.500 M202.5 586.500 V600.500 M194.0 600.500 H211.0 M194.0 604.500 H211.0 M202.5 604.500 V618.500 M154.5 562.5 L156.7 556.2 Q157.5 553.5 160.0 553.5 L164.9 553.5 Q167.6 553.5 168.4 555.3 C171.1 559.3 170.7 564.3 168.6 567.5 C166.1 564.3 165.7 559.3 168.4 555.3 Q169.2 553.5 171.9 553.5 L176.9 553.5 Q179.6 553.5 180.4 555.3 C183.1 559.3 182.7 564.3 180.6 567.5 C178.1 564.3 177.7 559.3 180.4 555.3 Q181.2 553.5 183.9 553.5 L189.5 553.5 Q192.0 553.5 192.8 556.2 L195 562.5 M219.500 562.5 H233.500 M233.500 553.0 V571.0 M237.500 553.0 V571.0 M237.500 562.5 H251.500 M219.500 634.5 H233.500 M233.500 625.0 V643.0 M237.500 625.0 V643.0 M237.500 634.5 H251.500 M267.5 586.5 L269.7 580.2 Q270.5 578.3 273.0 578.3 L278.1 578.3 Q280.8 578.3 281.6 580.1 C284.3 583.3 283.9 588.3 281.8 591.9 C279.3 588.3 278.9 583.3 281.6 580.1 Q282.4 578.3 285.1 578.3 L290.2 578.3 Q292.9 578.3 293.7 580.1 C296.4 583.3 296.0 588.3 293.9 591.9 C291.4 588.3 291.0 583.3 293.7 580.1 Q294.5 578.3 297.2 578.3 L303.0 578.3 Q305.5 578.3 306.3 580.2 L308.5 586.5 M267.5 618.5 L269.7 612.2 Q270.5 610.3 273.0 610.3 L278.1 610.3 Q280.8 610.3 281.6 612.1 C284.3 615.3 283.9 620.3 281.8 623.9 C279.3 620.3 278.9 615.3 281.6 612.1 Q282.4 610.3 285.1 610.3 L290.2 610.3 Q292.9 610.3 293.7 612.1 C296.4 615.3 296.0 620.3 293.9 623.9 C291.4 620.3 291.0 615.3 293.7 612.1 Q294.5 610.3 297.2 610.3 L303.0 610.3 Q305.5 610.3 306.3 612.2 L308.5 618.5 M428.7 573.5 a15.700 15.700 0 1 0 -31.400 0 a15.700 15.700 0 1 0 31.400 0 M413.5 554.0 V564.0 L403.8 575.2 M413.5 583.9 V594.0 M425.8 563.7 L428.0 562.5 H437.5 M424.7 584.0 L429.3 586.5 H437.5 M433.0 566.5 H438.0 M433.0 582.5 H438.0 M435.5 580.0 V585.0 M428.7 630.5 a15.700 15.700 0 1 0 -31.400 0 a15.700 15.700 0 1 0 31.400 0 M413.5 611.0 V621.0 L403.8 632.2 M413.5 640.9 V651.0 M425.8 619.7 L428.0 618.5 H437.5 M424.7 641.0 L429.3 643.5 H437.5 M433.0 622.5 H438.0 M433.0 639.5 H438.0 M435.5 637.0 V642.0 M534.2 573.5 a15.700 15.700 0 1 0 -31.400 0 a15.700 15.700 0 1 0 31.400 0 M518.5 594.0 V584.8 L527.5 572.8 M518.5 564.5 V554.0 M506.0 564.5 L503.5 562.5 H495.0 M506.0 584.5 L503.5 586.5 H495.0 M494.0 566.5 H499.0 M496.5 564.0 V569.0 M494.0 582.5 H499.0 M534.2 630.5 a15.700 15.700 0 1 0 -31.400 0 a15.700 15.700 0 1 0 31.400 0 M518.5 651.0 V641.8 L527.5 629.8 M518.5 621.5 V611.0 M506.0 620.5 L503.5 618.5 H495.0 M506.0 641.5 L503.5 643.5 H495.0 M494.0 622.5 H499.0 M496.5 620.0 V625.0 M494.0 639.5 H499.0 M606.9000000000001 621.8 a15.700 15.700 0 1 0 -31.400 0 a15.700 15.700 0 1 0 31.400 0 M591.5 604 V606.0999999999999 M591.5 637.5 V643 M587.0 612.3 H596.0 M591.5 608.3 V616.8 M587.0 632.3 H596.0 M476.9 703 a15.700 15.700 0 1 0 -31.400 0 a15.700 15.700 0 1 0 31.400 0 M461.5 683.5 V687.3 M461.5 718.7 V724 M457.0 693.5 H466.0 M461.5 689.5 V698 M457.0 713.5 H466.0" fill="none" stroke="#000080" stroke-width="0.75" shape-rendering="crispEdges"/>
<g fill="none" stroke="#000080" stroke-width="1.05"><circle cx="273.0" cy="589.9" r="1.6"/><circle cx="273.0" cy="621.9" r="1.6"/><circle cx="402.7" cy="575.9" r="1.5"/><circle cx="413.2" cy="582.1" r="1.6"/><circle cx="402.7" cy="632.9" r="1.5"/><circle cx="413.2" cy="639.1" r="1.6"/><circle cx="528.2" cy="571.9" r="1.5"/><circle cx="518.5" cy="566.3" r="1.6"/><circle cx="528.2" cy="628.9" r="1.5"/><circle cx="518.5" cy="623.3" r="1.6"/></g>
<rect x="136.0" y="560.0" width="5" height="5" fill="#0000FF" shape-rendering="crispEdges"/>
<rect x="200.0" y="560.0" width="5" height="5" fill="#0000FF" shape-rendering="crispEdges"/>
<rect x="136.0" y="632.0" width="5" height="5" fill="#0000FF" shape-rendering="crispEdges"/>
<rect x="200.0" y="632.0" width="5" height="5" fill="#0000FF" shape-rendering="crispEdges"/>
<rect x="411.0" y="535.0" width="5" height="5" fill="#0000FF" shape-rendering="crispEdges"/>
<rect x="411.0" y="600.0" width="5" height="5" fill="#0000FF" shape-rendering="crispEdges"/>
<rect x="411.0" y="665.0" width="5" height="5" fill="#0000FF" shape-rendering="crispEdges"/>
<rect x="516.0" y="600.0" width="5" height="5" fill="#0000FF" shape-rendering="crispEdges"/>
<rect x="459.0" y="560.0" width="5" height="5" fill="#0000FF" shape-rendering="crispEdges"/>
<rect x="443.0" y="584.0" width="5" height="5" fill="#0000FF" shape-rendering="crispEdges"/>
<rect x="443.0" y="600.0" width="5" height="5" fill="#0000FF" shape-rendering="crispEdges"/>
<rect x="443.0" y="616.0" width="5" height="5" fill="#0000FF" shape-rendering="crispEdges"/>
<rect x="459.0" y="641.0" width="5" height="5" fill="#0000FF" shape-rendering="crispEdges"/>
<text x="69.6" y="595.1" font-family='"DejaVu Sans", "Liberation Sans", sans-serif' font-size="12.2" font-weight="normal" fill="#000" text-anchor="start" textLength="17.3" lengthAdjust="spacingAndGlyphs" stroke="#000" stroke-width="0.8">R1</text>
<text x="70.8" y="613.1" font-family='"DejaVu Sans", "Liberation Sans", sans-serif' font-size="12.2" font-weight="normal" fill="#000" text-anchor="start" textLength="16.7" lengthAdjust="spacingAndGlyphs" stroke="#000" stroke-width="0.8">50</text>
<text x="166.1" y="550.5" font-family='"DejaVu Sans", "Liberation Sans", sans-serif' font-size="12.2" font-weight="normal" fill="#000" text-anchor="start" textLength="14.6" lengthAdjust="spacingAndGlyphs" stroke="#000" stroke-width="0.8">L3</text>
<text x="151.6" y="578.8" font-family='"DejaVu Sans", "Liberation Sans", sans-serif' font-size="12.2" font-weight="normal" fill="#000" text-anchor="start" textLength="43.9" lengthAdjust="spacingAndGlyphs" stroke="#000" stroke-width="0.8">3.183µ</text>
<text x="141.6" y="595.1" font-family='"DejaVu Sans", "Liberation Sans", sans-serif' font-size="12.2" font-weight="normal" fill="#000" text-anchor="start" textLength="15.6" lengthAdjust="spacingAndGlyphs" stroke="#000" stroke-width="0.8">C1</text>
<text x="141.6" y="619.0" font-family='"DejaVu Sans", "Liberation Sans", sans-serif' font-size="12.2" font-weight="normal" fill="#000" text-anchor="start" textLength="32.6" lengthAdjust="spacingAndGlyphs" stroke="#000" stroke-width="0.8">636p</text>
<text x="205.9" y="595.1" font-family='"DejaVu Sans", "Liberation Sans", sans-serif' font-size="12.2" font-weight="normal" fill="#000" text-anchor="start" textLength="15.6" lengthAdjust="spacingAndGlyphs" stroke="#000" stroke-width="0.8">C2</text>
<text x="205.9" y="619.0" font-family='"DejaVu Sans", "Liberation Sans", sans-serif' font-size="12.2" font-weight="normal" fill="#000" text-anchor="start" textLength="32.6" lengthAdjust="spacingAndGlyphs" stroke="#000" stroke-width="0.8">636p</text>
<text x="226.8" y="550.6" font-family='"DejaVu Sans", "Liberation Sans", sans-serif' font-size="12.2" font-weight="normal" fill="#000" text-anchor="start" textLength="16.0" lengthAdjust="spacingAndGlyphs" stroke="#000" stroke-width="0.8">C3</text>
<text x="242.9" y="550.6" font-family='"DejaVu Sans", "Liberation Sans", sans-serif' font-size="12.2" font-weight="normal" fill="#000" text-anchor="start" textLength="69.6" lengthAdjust="spacingAndGlyphs" stroke="#000" stroke-width="0.8">K1 L1 L2 1.</text>
<text x="219.3" y="582.0" font-family='"DejaVu Sans", "Liberation Sans", sans-serif' font-size="12.2" font-weight="normal" fill="#000" text-anchor="start" textLength="31.5" lengthAdjust="spacingAndGlyphs" stroke="#000" stroke-width="0.8">100n</text>
<text x="279.0" y="576.0" font-family='"DejaVu Sans", "Liberation Sans", sans-serif' font-size="12.2" font-weight="normal" fill="#000" text-anchor="start" textLength="15.1" lengthAdjust="spacingAndGlyphs" stroke="#000" stroke-width="0.8">L2</text>
<text x="274.4" y="603.8" font-family='"DejaVu Sans", "Liberation Sans", sans-serif' font-size="12.2" font-weight="normal" fill="#000" text-anchor="start" textLength="24.8" lengthAdjust="spacingAndGlyphs" stroke="#000" stroke-width="0.8">47µ</text>
<text x="279.0" y="608.0" font-family='"DejaVu Sans", "Liberation Sans", sans-serif' font-size="12.2" font-weight="normal" fill="#000" text-anchor="start" textLength="15.1" lengthAdjust="spacingAndGlyphs" stroke="#000" stroke-width="0.8">L1</text>
<text x="274.4" y="635.9" font-family='"DejaVu Sans", "Liberation Sans", sans-serif' font-size="12.2" font-weight="normal" fill="#000" text-anchor="start" textLength="24.8" lengthAdjust="spacingAndGlyphs" stroke="#000" stroke-width="0.8">47µ</text>
<text x="226.8" y="624.1" font-family='"DejaVu Sans", "Liberation Sans", sans-serif' font-size="12.2" font-weight="normal" fill="#000" text-anchor="start" textLength="16.0" lengthAdjust="spacingAndGlyphs" stroke="#000" stroke-width="0.8">C4</text>
<text x="219.3" y="655.0" font-family='"DejaVu Sans", "Liberation Sans", sans-serif' font-size="12.2" font-weight="normal" fill="#000" text-anchor="start" textLength="31.5" lengthAdjust="spacingAndGlyphs" stroke="#000" stroke-width="0.8">100n</text>
<text y="506.2" font-family='"DejaVu Sans", "Liberation Sans", sans-serif' font-size="12.2" font-weight="normal" fill="#000" stroke="#000" stroke-width="0.8"><tspan x="348.0" textLength="42.1" lengthAdjust="spacingAndGlyphs">.model</tspan> <tspan x="393.6" textLength="37.2" lengthAdjust="spacingAndGlyphs">MYSW</tspan> <tspan x="434.6" textLength="67.6" lengthAdjust="spacingAndGlyphs">SW(Ron=5</tspan> <tspan x="507.2" textLength="69.9" lengthAdjust="spacingAndGlyphs">Roff=1Meg</tspan> <tspan x="581.4" textLength="6.2" lengthAdjust="spacingAndGlyphs">)</tspan></text>
<text x="410.9" y="526.3" font-family='"DejaVu Sans", "Liberation Sans", sans-serif' font-size="12.2" font-weight="normal" fill="#000" text-anchor="start" textLength="52.6" lengthAdjust="spacingAndGlyphs" stroke="#000" stroke-width="0.8">.tran 2m</text>
<text x="384.5" y="557.7" font-family='"DejaVu Sans", "Liberation Sans", sans-serif' font-size="12.2" font-weight="normal" fill="#000" text-anchor="start" textLength="16.3" lengthAdjust="spacingAndGlyphs" stroke="#000" stroke-width="0.8">S3</text>
<text x="362.9" y="599.1" font-family='"DejaVu Sans", "Liberation Sans", sans-serif' font-size="12.2" font-weight="normal" fill="#000" text-anchor="start" textLength="38.2" lengthAdjust="spacingAndGlyphs" stroke="#000" stroke-width="0.8">MYSW</text>
<text x="384.5" y="615.1" font-family='"DejaVu Sans", "Liberation Sans", sans-serif' font-size="12.2" font-weight="normal" fill="#000" text-anchor="start" textLength="16.6" lengthAdjust="spacingAndGlyphs" stroke="#000" stroke-width="0.8">S4</text>
<text x="362.9" y="656.3" font-family='"DejaVu Sans", "Liberation Sans", sans-serif' font-size="12.2" font-weight="normal" fill="#000" text-anchor="start" textLength="38.2" lengthAdjust="spacingAndGlyphs" stroke="#000" stroke-width="0.8">MYSW</text>
<text x="529.8" y="557.9" font-family='"DejaVu Sans", "Liberation Sans", sans-serif' font-size="12.2" font-weight="normal" fill="#000" text-anchor="start" textLength="38.0" lengthAdjust="spacingAndGlyphs" stroke="#000" stroke-width="0.8">MYSW</text>
<text x="529.8" y="598.6" font-family='"DejaVu Sans", "Liberation Sans", sans-serif' font-size="12.2" font-weight="normal" fill="#000" text-anchor="start" textLength="15.7" lengthAdjust="spacingAndGlyphs" stroke="#000" stroke-width="0.8">S1</text>
<text x="529.8" y="614.5" font-family='"DejaVu Sans", "Liberation Sans", sans-serif' font-size="12.2" font-weight="normal" fill="#000" text-anchor="start" textLength="38.0" lengthAdjust="spacingAndGlyphs" stroke="#000" stroke-width="0.8">MYSW</text>
<text x="529.8" y="655.8" font-family='"DejaVu Sans", "Liberation Sans", sans-serif' font-size="12.2" font-weight="normal" fill="#000" text-anchor="start" textLength="16.3" lengthAdjust="spacingAndGlyphs" stroke="#000" stroke-width="0.8">S2</text>
<text x="432.2" y="688.2" font-family='"DejaVu Sans", "Liberation Sans", sans-serif' font-size="12.2" font-weight="normal" fill="#000" text-anchor="start" textLength="17.0" lengthAdjust="spacingAndGlyphs" stroke="#000" stroke-width="0.8">V2</text>
<text x="328.0" y="727.5" font-family='"DejaVu Sans", "Liberation Sans", sans-serif' font-size="12.2" font-weight="normal" fill="#000" text-anchor="start" textLength="121.3" lengthAdjust="spacingAndGlyphs" stroke="#000" stroke-width="0.8">SINE(0 1 5e6 0 0 0)</text>
<text x="602.7" y="607.1" font-family='"DejaVu Sans", "Liberation Sans", sans-serif' font-size="12.2" font-weight="normal" fill="#000" text-anchor="start" textLength="16.3" lengthAdjust="spacingAndGlyphs" stroke="#000" stroke-width="0.8">V3</text>
<text x="602.7" y="648.3" font-family='"DejaVu Sans", "Liberation Sans", sans-serif' font-size="12.2" font-weight="normal" fill="#000" text-anchor="start" textLength="85.3" lengthAdjust="spacingAndGlyphs" stroke="#000" stroke-width="0.8">SINE(0 1 1e3)</text>
<rect x="1" y="777" width="762" height="22" fill="#F0F0F0" />
<rect x="1" y="777" width="762" height="1" fill="#FFFFFF" />
<rect x="1" y="778" width="762" height="1" fill="#EDEAE4" />
<rect x="1" y="779" width="762" height="1" fill="#FFFFFF" />
<rect x="0" y="799" width="764" height="1" fill="#8A8A8A" />
<rect x="743" y="782" width="1" height="16" fill="#C9C9C9" />
<rect x="759" y="789" width="2" height="2" fill="#B4B4B4" />
<rect x="756" y="792" width="2" height="2" fill="#B4B4B4" />
<rect x="759" y="792" width="2" height="2" fill="#B4B4B4" />
<rect x="753" y="795" width="2" height="2" fill="#B4B4B4" />
<rect x="756" y="795" width="2" height="2" fill="#B4B4B4" />
<rect x="759" y="795" width="2" height="2" fill="#B4B4B4" />
</svg>
</body></html>
